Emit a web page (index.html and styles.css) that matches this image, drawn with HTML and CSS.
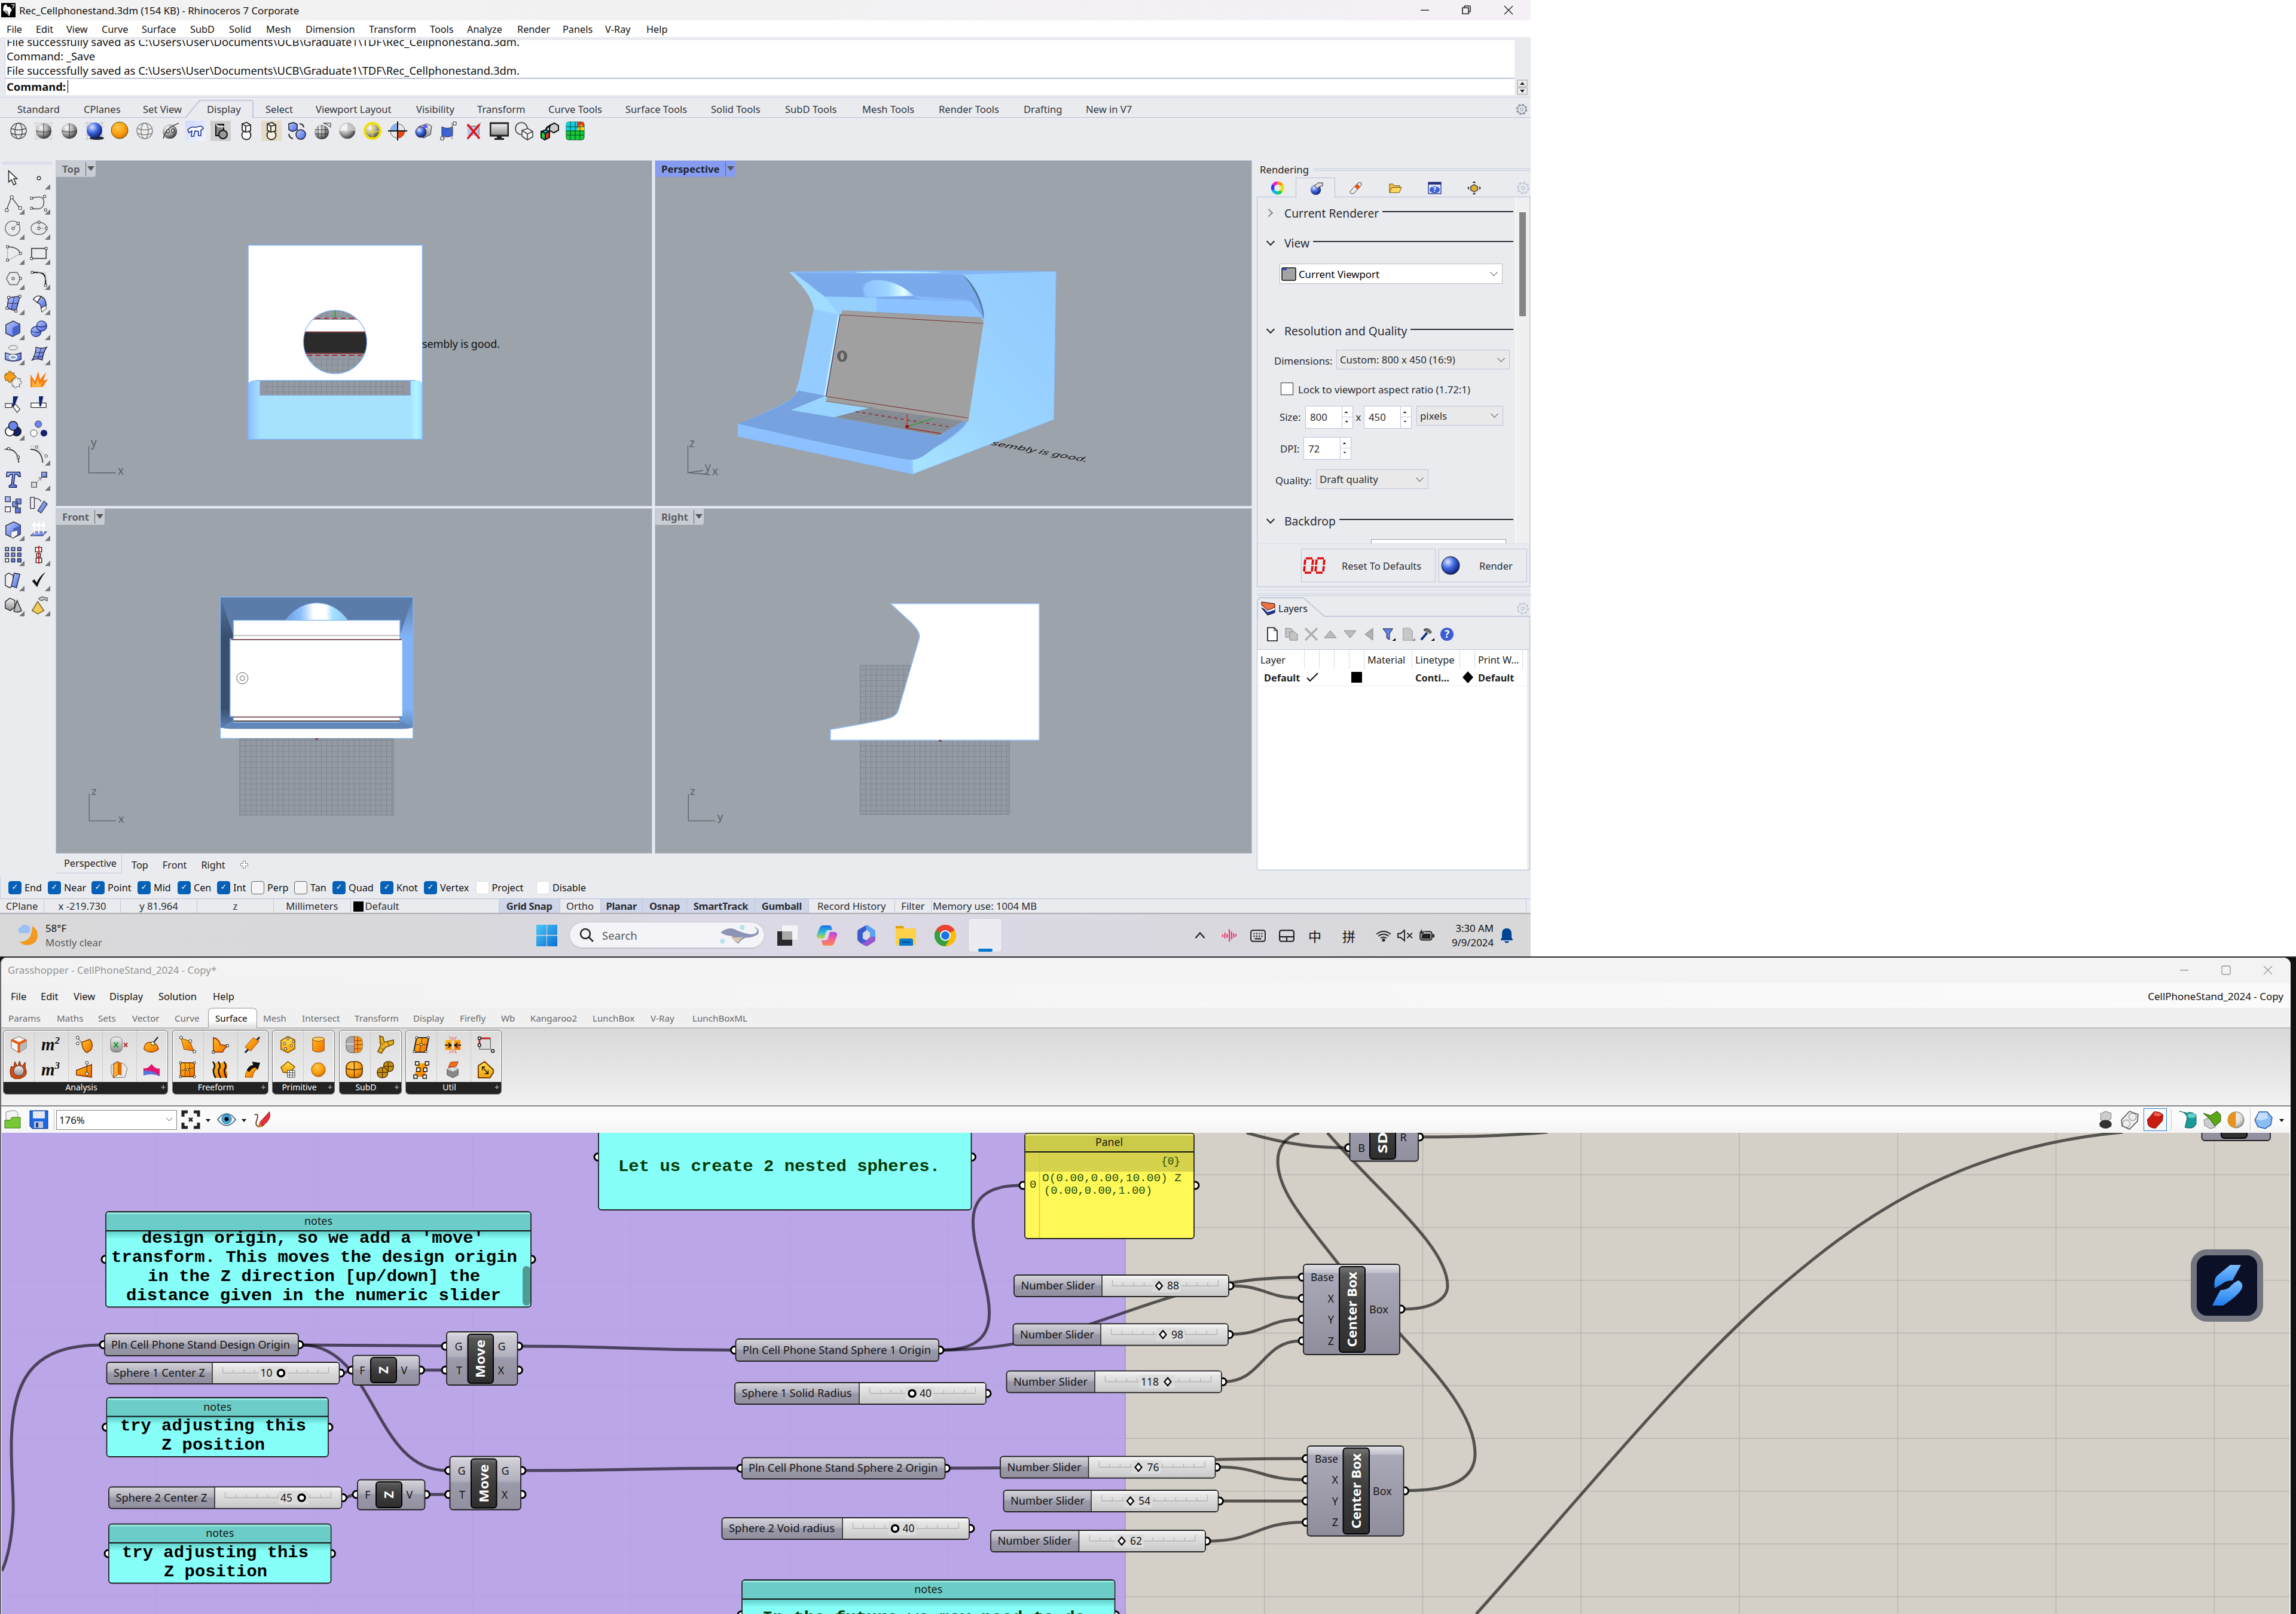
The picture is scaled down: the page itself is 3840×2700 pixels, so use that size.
FILE: index.html
```html
<!DOCTYPE html>
<html lang="en">
<head>
<meta charset="utf-8">
<title>Rhinoceros and Grasshopper</title>
<link rel="stylesheet" href="styles.css">
</head>
<body>
<svg class="defs" width="0" height="0">
  <defs>
    <radialGradient id="gG" cx=".35" cy=".3" r=".8"><stop offset="0" stop-color="#fff"/><stop offset=".5" stop-color="#a8a8a8"/><stop offset="1" stop-color="#222"/></radialGradient>
    <radialGradient id="gL" cx=".35" cy=".3" r=".8"><stop offset="0" stop-color="#fff"/><stop offset=".6" stop-color="#ddd"/><stop offset="1" stop-color="#888"/></radialGradient>
    <radialGradient id="gB" cx=".35" cy=".3" r=".8"><stop offset="0" stop-color="#dfe8ff"/><stop offset=".45" stop-color="#3f68e0"/><stop offset="1" stop-color="#04105a"/></radialGradient>
    <radialGradient id="gO" cx=".4" cy=".3" r=".8"><stop offset="0" stop-color="#ffc94a"/><stop offset=".6" stop-color="#f79a0c"/><stop offset="1" stop-color="#b86400"/></radialGradient>
    <linearGradient id="lB" x1="0" y1="0" x2="1" y2="1"><stop offset="0" stop-color="#b9c8ff"/><stop offset="1" stop-color="#4a68e0"/></linearGradient>
    <linearGradient id="lO" x1="0" y1="0" x2="1" y2="1"><stop offset="0" stop-color="#ffc21a"/><stop offset="1" stop-color="#f06c00"/></linearGradient>
    <linearGradient id="lY" x1="0" y1="0" x2="0" y2="1"><stop offset="0" stop-color="#ffe04a"/><stop offset="1" stop-color="#f2a20c"/></linearGradient>
    <linearGradient id="lG" x1="0" y1="0" x2="0" y2="1"><stop offset="0" stop-color="#f4f4f4"/><stop offset="1" stop-color="#8c8c8c"/></linearGradient>
    <linearGradient id="edgeL" x1="0" x2="1"><stop offset="0" stop-color="#8cbcfa"/><stop offset="1" stop-color="#a6e2fe"/></linearGradient>
    <linearGradient id="edgeR" x1="0" x2="1"><stop offset="0" stop-color="#a6e2fe"/><stop offset=".5" stop-color="#b2f5ff"/><stop offset="1" stop-color="#9fdcff"/></linearGradient>
    <linearGradient id="dome" x1="0" x2="1"><stop offset="0" stop-color="#6f9cdb"/><stop offset=".25" stop-color="#8cc0ff"/><stop offset=".45" stop-color="#fff"/><stop offset=".65" stop-color="#fff"/><stop offset=".75" stop-color="#a6e2fe"/><stop offset="1" stop-color="#8cc8f8"/></linearGradient>
    <linearGradient id="dome2" x1="0" x2="1"><stop offset="0" stop-color="#8cc0ff"/><stop offset=".5" stop-color="#9ed6ff"/><stop offset=".8" stop-color="#e4ffff"/><stop offset="1" stop-color="#9bd4ff"/></linearGradient>
    <linearGradient id="sideL" x1="0" y1="0" x2="0" y2="1"><stop offset="0" stop-color="#56759f"/><stop offset=".3" stop-color="#3a4f6e"/><stop offset=".85" stop-color="#3a4f6e"/><stop offset="1" stop-color="#5d84b6"/></linearGradient>
    <linearGradient id="sideR" x1="0" y1="0" x2="0" y2="1"><stop offset="0" stop-color="#5b7ba9"/><stop offset=".3" stop-color="#82b2f6"/><stop offset=".85" stop-color="#82b2f6"/><stop offset="1" stop-color="#6088ba"/></linearGradient>
    <linearGradient id="flank" x1="0" y1="1" x2=".7" y2="0"><stop offset="0" stop-color="#a8e4ff"/><stop offset=".4" stop-color="#9bd5ff"/><stop offset="1" stop-color="#94ccff"/></linearGradient>
    <pattern id="cg" width="9.1" height="9.1" patternUnits="userSpaceOnUse"><rect width="9.1" height="9.1" fill="#969da6"/><path d="M0 3h9M0 6h9M3 0v9M6 0v9" stroke="#8f969f" stroke-width=".7"/><path d="M0 .5h9.1M.5 0v9.1" stroke="#7e858d"/></pattern>
    <linearGradient id="nodeG" x1="0" y1="0" x2="0" y2="1"><stop offset="0" stop-color="#e4e3e9"/><stop offset=".08" stop-color="#cfced6"/><stop offset=".45" stop-color="#b1b0bd"/><stop offset=".5" stop-color="#9b9aaa"/><stop offset="1" stop-color="#918f9e"/></linearGradient>
    <linearGradient id="nodeBig" x1="0" y1="0" x2="0" y2="1"><stop offset="0" stop-color="#e4e3e9"/><stop offset=".09" stop-color="#c3c2cc"/><stop offset=".1" stop-color="#aaa9b8"/><stop offset="1" stop-color="#8f8d9c"/></linearGradient>
    <linearGradient id="sldG" x1="0" y1="0" x2="0" y2="1"><stop offset="0" stop-color="#fafafa"/><stop offset=".15" stop-color="#e8e8e8"/><stop offset="1" stop-color="#c8c8c8"/></linearGradient>
    <linearGradient id="icoG" x1="0" y1="0" x2="0" y2="1"><stop offset="0" stop-color="#777"/><stop offset=".1" stop-color="#555"/><stop offset=".5" stop-color="#3c3c3c"/><stop offset="1" stop-color="#2e2e2e"/></linearGradient>
    <linearGradient id="noteSh" x1="0" y1="0" x2="0" y2="1"><stop offset="0" stop-color="#5fcac4"/><stop offset="1" stop-color="#86fff8"/></linearGradient>
    <linearGradient id="sBlue" x1="0" y1="0" x2="0" y2="1"><stop offset="0" stop-color="#7cc0ff"/><stop offset="1" stop-color="#1e7cf0"/></linearGradient>
    <linearGradient id="cop1" x1="0" y1="0" x2="0" y2="1"><stop offset="0" stop-color="#1c6fe8"/><stop offset=".5" stop-color="#2ab8d8"/><stop offset="1" stop-color="#c8d838"/></linearGradient>
    <linearGradient id="cop2" x1="0" y1="0" x2="0" y2="1"><stop offset="0" stop-color="#b048e8"/><stop offset=".5" stop-color="#f0609a"/><stop offset="1" stop-color="#ff8a4a"/></linearGradient>
    <linearGradient id="win" x1="0" y1="0" x2="1" y2="1"><stop offset="0" stop-color="#4cc8fa"/><stop offset="1" stop-color="#0a6fd0"/></linearGradient>
  </defs>
</svg>
<div class="screen">

<section class="rhino">
  <header class="r-title">
    <svg width="24" height="24" viewBox="0 0 24 24"><path fill="#000" d="M0 0h24v24H0z"/><path fill="#fff" d="M4 5l4-3 3 5 3-1 4 6-3 4-1 6-6-5-5-5z"/><path fill="#777" d="M5 12l6 2 2 8z"/><path d="M17 3h5l-3 6" fill="none" stroke="#ccc" stroke-width="1.500"/></svg>
    <span class="r-name">Rec_Cellphonestand.3dm (154 KB) - Rhinoceros 7 Corporate</span>
    <div class="wbtns"><svg width="16" height="16"><path d="M1 8h14" stroke="#222" fill="none" stroke-width="1.4"/></svg><svg width="18" height="18"><path d="M2 5h10v10H2zM5 5V3q0-1 1-1h8q1 0 1 1v8q0 1-1 1h-2" stroke="#222" fill="none" stroke-width="1.6"/></svg><svg width="16" height="16"><path d="M1 1l14 14M15 1L1 15" stroke="#222" fill="none" stroke-width="1.4"/></svg></div>
  </header>
  <nav class="r-menu"><span>File</span><span>Edit</span><span>View</span><span>Curve</span><span>Surface</span><span>SubD</span><span>Solid</span><span>Mesh</span><span>Dimension</span><span>Transform</span><span>Tools</span><span>Analyze</span><span>Render</span><span>Panels</span><span>V-Ray</span><span>Help</span></nav>
  <div class="cmd">
    <div class="cmd-box">
      <div class="hist"><p>File successfully saved as C:\Users\User\Documents\UCB\Graduate1\TDF\Rec_Cellphonestand.3dm.</p><p>Command: _Save</p><p>File successfully saved as C:\Users\User\Documents\UCB\Graduate1\TDF\Rec_Cellphonestand.3dm.</p></div>
      <div class="prompt"><b>Command:</b><i></i></div>
    </div>
    <div class="spin2"><svg width="18" height="26"><path d="M1 1h16v11H1zM1 14h16v11H1z" fill="#eee" stroke="#999"/><path d="M5 9h8L9 4zM5 17h8l-4 5z" fill="#222"/></svg></div>
  </div>
  <nav class="r-tabs"><span>Standard</span><span>CPlanes</span><span>Set View</span><span class="on"><svg width="114" height="31" viewBox="0 0 114 31"><path d="M0 30L24 1h87q2 0 2 2v27" fill="#e9ebef" stroke="#b8c0da" stroke-width="1.6"/></svg>Display</span><span>Select</span><span>Viewport Layout</span><span>Visibility</span><span>Transform</span><span>Curve Tools</span><span>Surface Tools</span><span>Solid Tools</span><span>SubD Tools</span><span>Mesh Tools</span><span>Render Tools</span><span>Drafting</span><span>New in V7</span><span class="gear"><svg width="22" height="22" viewBox="0 0 22 22" fill="none" stroke="#8a8f9c"><circle cx="11" cy="11" r="8" stroke-width="2.5" stroke-dasharray="4 2.3"/><circle cx="11" cy="11" r="6.5"/><circle cx="11" cy="11" r="2.5"/></svg></span></nav>
  <div class="r-icons">
    <svg viewBox="0 0 32 32" fill="none" stroke="#555" stroke-width="1.5"><circle cx="16" cy="16" r="13"/><ellipse cx="16" cy="16" rx="6" ry="13"/><path d="M4 12q12 5 24 0M4 20q12 5 24 0"/></svg>
    <svg viewBox="0 0 32 32"><path d="M0 3h32M0 9h32M0 23h32M0 29h32M4 0v32M28 0v32" stroke="#ccc"/><circle cx="16" cy="16" r="13" fill="url(#gG)"/><path d="M16 3v26M3 16q13 4 26 0" stroke="#333" fill="none"/></svg>
    <svg viewBox="0 0 32 32"><circle cx="16" cy="16" r="13" fill="url(#gG)"/><path d="M16 3v26M3 16q13 4 26 0" stroke="#333" fill="none"/></svg>
    <svg viewBox="0 0 32 32"><path d="M0 3h32M0 9h32M0 23h32M0 29h32M4 0v32M10 0v32M28 0v32" stroke="#bbb"/><ellipse cx="20" cy="28" rx="12" ry="3" fill="#223"/><circle cx="16" cy="15" r="13" fill="url(#gB)"/></svg>
    <svg viewBox="0 0 32 32"><circle cx="16" cy="15" r="14" fill="url(#gO)" stroke="#7a4a00"/></svg>
    <svg viewBox="0 0 32 32" fill="none" stroke="#888" stroke-width="1.5"><circle cx="16" cy="16" r="13" fill="#eee"/><ellipse cx="16" cy="16" rx="6" ry="13"/><path d="M4 12q12 5 24 0M4 20q12 5 24 0"/></svg>
    <svg viewBox="0 0 32 32"><circle cx="15" cy="17" r="12" fill="url(#gG)"/><path d="M4 29C8 12 18 8 30 3" stroke="#444" fill="none" stroke-width="1.5"/><path d="M10 14h4v5h-4zM18 13h4v5h-4z" fill="#fff" stroke="#000"/></svg>
    <svg viewBox="0 0 32 32" class="hl-b"><path d="M3 14q6-6 13-4l8-2q5 1 5 4l-4 3v9h-4v-7l-6-1-2 9H9l1-9-5 3z" fill="#fff" stroke="#1d2f8c" stroke-width="1.6"/></svg>
    <svg viewBox="0 0 32 32" class="hl-g"><path d="M8 5h13v19H8z" fill="#888" stroke="#111" stroke-width="2"/><path d="M8 5l5 4h9" stroke="#eee" fill="none" stroke-width="2"/><circle cx="20" cy="22" r="7" fill="#999" stroke="#111" stroke-width="2"/></svg>
    <svg viewBox="0 0 32 32" fill="#fff" stroke="#222" stroke-width="1.8"><circle cx="16" cy="23" r="7.500"/><path d="M9 4l8-2 6 4v10l-8 2-6-3zM9 4l6 4v9M15 8l8-2"/></svg>
    <svg viewBox="0 0 32 32" class="hl-y" fill="#f6f0dc" stroke="#222" stroke-width="1.8"><circle cx="16" cy="23" r="7.500"/><path d="M9 4l8-2 6 4v10l-8 2-6-3zM9 4l6 4v9M15 8l8-2"/></svg>
    <svg viewBox="0 0 32 32"><path d="M3 4l8-2 6 3v9l-8 3-6-3z" fill="url(#lB)" stroke="#112" stroke-width="1.4"/><circle cx="23" cy="22" r="8" fill="url(#lB)" stroke="#112" stroke-width="1.4"/><path d="M21 4q6 0 7 6M3 21q1 7 7 8" stroke="#222" fill="none" stroke-width="2"/></svg>
    <svg viewBox="0 0 32 32"><circle cx="15" cy="18" r="12" fill="url(#gG)"/><path d="M15 6v24M4 14h22M4 21h22M9 8v20M21 8v20" stroke="#333" fill="none"/><path d="M18 3h12v7l-5-4z" fill="#eee" stroke="#222"/></svg>
    <svg viewBox="0 0 32 32"><circle cx="16" cy="16" r="13" fill="url(#gG)" stroke="#777"/><path d="M3 16a13 13 0 0 1 13-13v13z" fill="#f4f4f4" fill-opacity=".8"/><path d="M16 16h13a13 13 0 0 0-13-13z" fill="#ccc" fill-opacity=".8"/></svg>
    <svg viewBox="0 0 32 32"><circle cx="16" cy="16" r="13" fill="url(#gG)" stroke="#f2e000" stroke-width="4"/><path d="M16 3v26M3 16q13 4 26 0" stroke="#e8d820" fill="none" stroke-width="1.500"/></svg>
    <svg viewBox="0 0 32 32"><circle cx="16" cy="16" r="12" fill="#e8e8e8" stroke="#555"/><path d="M16 16V4A12 12 0 0 0 4 16z" fill="#8ab0f4"/><path d="M16 16v12a12 12 0 0 0 12-12z" fill="#e84a10"/><path d="M16 0v32M0 16h32" stroke="#111" stroke-width="2"/></svg>
    <svg viewBox="0 0 32 32"><path d="M8 9l14-5 8 4-2 14-12 6z" fill="url(#lG)" stroke="#333"/><circle cx="12" cy="18" r="9" fill="url(#gB)" stroke="#333"/><path d="M16 6h7v5h-7z" fill="#6a5cf0"/></svg>
    <svg viewBox="0 0 32 32"><path d="M5 9q9 5 18 0v15q-9 4-18 0z" fill="#3a62d8" stroke="#234"/><path d="M8 30L26 4M22 2v28" stroke="#777" fill="none"/><path d="M3 26h5v5H3zM24 1h5v5h-5z" fill="#fff" stroke="#222"/></svg>
    <svg viewBox="0 0 32 32"><path d="M6 8h18v16H6z" fill="#b8c4e8"/><path d="M5 30L28 2M5 8h20v16" stroke="#555" fill="none"/><path d="M6 5l20 24M26 5L6 29" stroke="#e01010" stroke-width="3.500"/></svg>
    <svg viewBox="0 0 32 32"><path d="M1 3h30v21H1z" fill="url(#lG)" stroke="#222" stroke-width="3"/><path d="M12 24h8v4h4v3H8v-3h4z" fill="#222"/></svg>
    <svg viewBox="0 0 32 32" fill="#f3f3f3" stroke="#444" stroke-width="1.6"><circle cx="11" cy="12" r="10" fill="none"/><path d="M12 15l10-3 8 5v9l-9 5-9-6zM12 15l9 6v10M21 21l9-4"/></svg>
    <svg viewBox="0 0 32 32"><path d="M2 17l8-3 6 3v10l-8 4-6-4z" fill="#18b8c0" stroke="#111" stroke-width="2"/><path d="M2 17l7 3v11M9 20l7-3" stroke="#111" fill="none" stroke-width="2"/><path d="M3 19l5 2v8l-5-3z" fill="#20d820"/><path d="M10 21l5-2v7l-5 3z" fill="#e83020"/><path d="M16 7l8-4 7 4v8l-8 4-7-4z" fill="#ccc" stroke="#111" stroke-width="2"/><path d="M10 14q2-6 8-6" stroke="#111" stroke-width="3" fill="none"/></svg>
    <svg viewBox="0 0 32 32"><rect x="1" y="1" width="30" height="30" rx="4" fill="#18c838" stroke="#063"/><path d="M1 5q0-4 4-4h14v14H1z" fill="#10d0e8"/><path d="M19 1h8q4 0 4 4v6H19z" fill="#f03818"/><path d="M24 4l7 6v5H19z" fill="#f8d020"/><path d="M1 9h30M1 16h30M1 23h30M8 1v30M16 1v30M24 1v30" stroke="#042" stroke-width="1"/></svg>
  </div>

  <div class="r-main">
    <div class="r-left">
      <div class="r-work">
        <div class="tools">
          <span><svg viewBox="0 0 32 32"><path d="M8 3v20l5-4 4 9 4-2-4-9h6z" fill="#fff" stroke="#222" stroke-width="1.6"/></svg></span>
          <span class="m"><svg viewBox="0 0 32 32"><circle cx="16" cy="16" r="3" fill="#fff" stroke="#333" stroke-width="1.6"/></svg></span>
          <span class="m"><svg viewBox="0 0 32 32"><path d="M4 28L13 5l15 20" fill="none" stroke="#555" stroke-width="1.6"/><path d="M2 26h5v5H2zM11 3h5v5h-5zM26 22h5v5h-5z" fill="#fff" stroke="#222"/></svg></span>
          <span class="m"><svg viewBox="0 0 32 32"><path d="M3 7Q26 0 25 15t-21 10" fill="none" stroke="#555" stroke-width="1.6"/><path d="M1 5h4v4H1zM1 23h4v4H1zM24 2h4v4h-4zM26 26h4v4h-4z" fill="#fff" stroke="#222"/></svg></span>
          <span class="m"><svg viewBox="0 0 32 32"><circle cx="15" cy="16" r="13" fill="none" stroke="#777" stroke-width="1.6"/><path d="M16 16L25 7" stroke="#555"/><path d="M14 14h4v4h-4zM23 5h4v4h-4z" fill="#fff" stroke="#222"/></svg></span>
          <span class="m"><svg viewBox="0 0 32 32"><ellipse cx="16" cy="16" rx="14" ry="11" fill="none" stroke="#777" stroke-width="1.6"/><path d="M16 5v11h13" stroke="#999" fill="none"/><path d="M14 14h4v4h-4zM14 3h4v4h-4zM28 14h4v4h-4z" fill="#fff" stroke="#222"/></svg></span>
          <span class="m"><svg viewBox="0 0 32 32"><path d="M6 4q18 0 23 12" fill="none" stroke="#444" stroke-width="1.6"/><path d="M6 29V4M29 16L6 29" fill="none" stroke="#aaa" stroke-width="1.2"/><path d="M4 2h4v4H4zM4 26h4v4H4zM27 14h4v4h-4z" fill="#fff" stroke="#222"/></svg></span>
          <span class="m"><svg viewBox="0 0 32 32"><path d="M3 7h26v18H3z" fill="none" stroke="#444" stroke-width="1.8"/><path d="M1 23h4v4H1zM27 5h4v4h-4z" fill="#fff" stroke="#222"/></svg></span>
          <span class="m"><svg viewBox="0 0 32 32"><path d="M4 16L10 5h13l6 11-6 11H10z" fill="none" stroke="#666" stroke-width="1.6"/><path d="M14 14h4v4h-4zM27 14h4v4h-4z" fill="#fff" stroke="#222"/></svg></span>
          <span class="m"><svg viewBox="0 0 32 32"><path d="M4 5h10q14 0 14 14v9" fill="none" stroke="#111" stroke-width="2.2"/><path d="M14 5h14v14" stroke="#bbb" fill="none"/><path d="M2 3h4v4H2zM26 26h4v4h-4z" fill="#fff" stroke="#222"/></svg></span>
          <span class="m"><svg viewBox="0 0 32 32"><path d="M8 5l20-2-7 26-16-5z" fill="url(#lB)" stroke="#223" stroke-width="1.4"/><path d="M18 4l-5 23M6 15l19 1" stroke="#223"/><path d="M6 3h4v4H6zM26 1h4v4h-4zM19 27h4v4h-4zM3 22h4v4H3z" fill="#fff" stroke="#222"/></svg></span>
          <span class="m"><svg viewBox="0 0 32 32"><path d="M6 8q6-8 14-5l-7 11q-2-2-7-6z" fill="#fff" stroke="#222" stroke-width="1.4"/><path d="M13 14l7-11q9 4 9 16l-9 5q0-8-7-10z" fill="url(#lB)" stroke="#222" stroke-width="1.4"/><path d="M20 24l9-5v6l-8 6z" fill="#fff" stroke="#222"/></svg></span>
          <span class="m"><svg viewBox="0 0 32 32"><path d="M3 9l13-7 12 6v15l-13 7-12-6z" fill="url(#lB)" stroke="#222" stroke-width="1.4"/><path d="M15 14v16l13-7V8z" fill="#4a62c8"/></svg></span>
          <span class="m"><svg viewBox="0 0 32 32" fill="url(#lB)" stroke="#1a2a70" stroke-width="1.4"><circle cx="11" cy="21" r="9"/><circle cx="21" cy="11" r="9"/><path d="M3 20q8 5 17 1M13 11q8 4 17-1" fill="none"/></svg></span>
          <span class="m"><svg viewBox="0 0 32 32"><ellipse cx="16" cy="5" rx="8" ry="4" fill="none" stroke="#666"/><path d="M2 14q14 6 28 0v12q-14 6-28 0z" fill="url(#lB)" stroke="#223" stroke-width="1.4"/><ellipse cx="16" cy="22" rx="6" ry="4" fill="#9ab" stroke="#fff" stroke-width="2.5"/></svg></span>
          <span class="m"><svg viewBox="0 0 32 32"><path d="M11 4q9 4 19 0-6 8-8 23-9-4-18 0Q10 18 11 4z" fill="url(#lB)" stroke="#223" stroke-width="1.4"/><path d="M20 5l-6 21M9 12q9 4 17 0M6 20q9 3 18 0" stroke="#223" fill="none"/></svg></span>
          <span><svg viewBox="0 0 32 32"><path d="M2 6l5 1q-1-5 3-5t3 4l5-1-1 5q5-1 4 3t-4 2l1 4-5-1q1 4-3 4t-3-4l-5 1 1-4q-4 0-3-4t4-1z" fill="#f5a21a" stroke="#7a4a00"/><path d="M15 15l4 1q0-4 3-3t2 3l5-1-1 5q4 0 3 3t-4 2l1 5-5-1q-1 4-4 3t-1-4l-4 1 1-4q-3-1-2-4t3-1z" fill="#eee" stroke="#555"/></svg></span>
          <span><svg viewBox="0 0 32 32"><path d="M1 31V8l8 12L15 2l3 15L29 4l-5 15 8-3-9 14z" fill="#f57c12"/><path d="M4 31V18l6 8 4-12 3 11 6-5-4 11z" fill="#ffb040"/></svg></span>
          <span><svg viewBox="0 0 32 32"><path d="M2 15h12v7H2zM14 18l5-3 9 10-5 6z" fill="#fff" stroke="#333" stroke-width="1.3"/><path d="M16 2h9l-7 18h-3z" fill="#13236e"/></svg></span>
          <span><svg viewBox="0 0 32 32"><path d="M2 14h27v8H2z" fill="#fff" stroke="#333" stroke-width="1.3"/><path d="M16 2h8l-4 18h-3z" fill="#13236e"/></svg></span>
          <span class="m"><svg viewBox="0 0 32 32" stroke="#111" stroke-width="1.6"><circle cx="22" cy="20" r="8" fill="#13236e"/><circle cx="10" cy="20" r="8" fill="#fff"/><circle cx="16" cy="10" r="8" fill="#6c86f0"/></svg></span>
          <span><svg viewBox="0 0 32 32"><circle cx="15" cy="7" r="6" fill="#6c86f0" stroke="#334"/><circle cx="7" cy="23" r="6" fill="#fff" stroke="#333"/><circle cx="25" cy="23" r="6" fill="#13236e"/></svg></span>
          <span><svg viewBox="0 0 32 32"><path d="M1 7q24-2 25 24" fill="none" stroke="#333" stroke-width="1.8"/><path d="M6 4h4v4H6zM23 19h4v4h-4z" fill="#fff" stroke="#111"/></svg></span>
          <span class="m"><svg viewBox="0 0 32 32"><path d="M1 7q20 0 22 24" fill="none" stroke="#333" stroke-width="1.8"/><path d="M1 2h10l18 18" stroke="#888" stroke-dasharray="2 2" fill="none"/><path d="M10 1h4v4h-4zM27 17h4v4h-4z" fill="#fff" stroke="#444"/></svg></span>
          <span><svg viewBox="0 0 32 32"><path d="M5 3h23l1 8h-3l-3-4h-4l-2 18 5 2v3H9v-3l4-2 2-18h-4l-3 4H4z" fill="url(#lB)" stroke="#1a2560" stroke-width="1.6"/></svg></span>
          <span class="m"><svg viewBox="0 0 32 32"><path d="M3 21h9v9H3z" fill="#ddd" stroke="#555" stroke-width="1.4"/><path d="M21 3h9v9h-9z" fill="url(#lB)" stroke="#333" stroke-width="1.4"/><path d="M13 20l7-7M15 13h5v5" stroke="#555" fill="none"/></svg></span>
          <span><svg viewBox="0 0 32 32" stroke="#334" stroke-width="1.4"><path d="M2 2h9v9H2zM21 6h9v9h-9zM15 11h9v9h-9zM20 22h9v9h-9z" fill="url(#lB)"/><path d="M2 20h9v9H2z" fill="#fff"/></svg></span>
          <span><svg viewBox="0 0 32 32" stroke="#334" stroke-width="1.4"><path d="M1 3h7v20H1z" fill="#eee"/><path d="M14 27L25 10l6 5-11 16z" fill="url(#lB)"/><path d="M9 5q8 0 11 6" fill="none"/></svg></span>
          <span class="m"><svg viewBox="0 0 32 32"><path d="M3 9l14-7 12 6v16l-13 7-13-6z" fill="url(#lB)" stroke="#222" stroke-width="1.4"/><path d="M16 14v16l13-7V8z" fill="#4a62c8"/><path d="M12 20l12-3v8l-8 6-4-2z" fill="#f3f3f3" stroke="#555"/></svg></span>
          <span class="m"><svg viewBox="0 0 32 32"><path d="M1 27l7-7h22l-7 7z" fill="url(#lB)" stroke="#334"/><path d="M8 23V6M16 23V6M24 23V6M5 9l3-6 3 6zM13 9l3-6 3 6zM21 9l3-6 3 6z" stroke="#fff" stroke-width="2" fill="#fff"/></svg></span>
          <span class="m"><svg viewBox="0 0 32 32" fill="url(#lB)" stroke="#223" stroke-width="1.4"><path d="M2 3h6v6H2zM13 3h6v6h-6zM24 3h6v6h-6zM2 13h6v6H2zM13 13h6v6h-6zM24 13h6v6h-6zM13 23h6v6h-6zM24 23h6v6h-6z"/><path d="M2 23h6v6H2z" fill="#fff"/></svg></span>
          <span class="m"><svg viewBox="0 0 32 32" fill="#fff" stroke="#333" stroke-width="1.6"><path d="M10 3h11v8H10zM12 14h7v6h-7zM11 22h10v8H11z"/><path d="M16 0v32" stroke="#e02020" stroke-width="2.2"/></svg></span>
          <span class="m"><svg viewBox="0 0 32 32" stroke="#223" stroke-width="1.4"><path d="M2 8l6-4 8 4v18l-6 4-8-4z" fill="#eee"/><path d="M18 4l10 2-6 24-9-3z" fill="url(#lB)"/></svg></span>
          <span class="m"><svg viewBox="0 0 32 32"><path d="M4 18l4-3 4 6Q18 8 28 2 18 14 13 29z" fill="#111"/></svg></span>
          <span class="m"><svg viewBox="0 0 32 32" stroke="#222" stroke-width="1.4"><path d="M2 10l8-6 9 4v12l-8 6-9-4z" fill="url(#lG)"/><path d="M23 8l8 18q-6 5-14 1z" fill="#bbb"/></svg></span>
          <span class="m"><svg viewBox="0 0 32 32"><path d="M14 10L4 26l10 6 11-6z" fill="#f0cc58" stroke="#6a5310" stroke-width="1.4"/><path d="M15 5q6-6 12-2h4v6l-6-3q-3 4-6 2z" fill="#bbb" stroke="#333"/></svg></span>
        </div>
        <div class="views">
          <div class="vp">
            <div class="vlabel">Top<i></i></div>
            <svg viewBox="94 269 996 577">
              <rect x="415" y="410" width="291.5" height="325" fill="#fff"/>
              <clipPath id="hole"><circle cx="560.5" cy="572" r="53"/></clipPath>
              <g clip-path="url(#hole)"><rect x="500" y="515" width="120" height="20" fill="url(#cg)"/><rect x="500" y="590" width="120" height="40" fill="url(#cg)"/><rect x="500" y="555" width="120" height="37" fill="#2b2b2b"/><path d="M500 555.5h120M500 591h120" stroke="#7c3a3e" stroke-width="2"/><path d="M500 532.5h120M500 594.5h120" stroke="#b01020" stroke-width="1.5" stroke-dasharray="8 6"/><path d="M560.500 518v14" stroke="#2fa02f" stroke-width="2"/></g>
              <circle cx="560.500" cy="572" r="53" fill="none" stroke="#7fb4f8" stroke-width="1.2"/>
              <path d="M415 735V641q6-5 13-5h266q8 0 12.500 5v94z" fill="#a6e2fe"/><path d="M415 735V641q6-5 13-5h8v99z" fill="url(#edgeL)"/><path d="M686 735V636h8q8 0 12.500 5v94z" fill="url(#edgeR)"/>
              <path d="M434.500 636.500h252v25h-252z" fill="#9198a1" stroke="#86b6f6"/><path d="M444 637h233v24H444z" fill="url(#cg)"/>
              <path d="M428 636.500h266M415 410h291.500v325H415z" fill="none" stroke="#7fb4f8" stroke-width="1.5"/>
              <text x="706" y="582" font-size="18" fill="#111" textLength="130">sembly is good.</text>
              <path d="M148.500 746v45h45" class="ax"/><text x="152" y="747" class="axt">y</text><text x="197" y="794" class="axt">x</text>
            </svg>
          </div>
          <div class="vp">
            <div class="vlabel act">Perspective<i></i></div>
            <svg viewBox="1096 269 997 577">
              <svg x="1080" y="240" width="1020" height="620" viewBox="0 0 1568 1568" preserveAspectRatio="none">
                <path d="M369 544L650 536 1055 542 1049 1168 686 1399 237 1239V1186C330 1125 375 1085 385 1065 392 1050 394 1030 395 1000L432 700C430 650 400 600 369 544z" fill="#94ccff"/>
                <path d="M369 544L650 536 1055 542 815 555z" fill="#84b4f4"/>
                <ellipse cx="650" cy="545" rx="110" ry="3" fill="#bff4ff"/>
                <path d="M380 546L815 555C850 610 868 650 869 745L837 670 460 648z" fill="#7aaaec"/>
                <path d="M369 544C400 600 425 640 432 700L500 725 460 648 380 546z" fill="#9fdcff"/>
                <path d="M460 648L837 670 869 740 500 725z" fill="#8cc2ff"/><path d="M460 648l133 3v70l-93 4z" fill="#96d0ff"/>
                <path d="M565 651C550 600 565 577 598 577 650 582 680 630 690 645z" fill="url(#dome2)" stroke="#84b4f4"/><path d="M690 645l17 17 130 8-3-8z" fill="#84b8fa"/>
                <path d="M815 555C850 620 870 680 869 745L862 690Q850 620 815 555z" fill="#4a6d9c"/>
                <path d="M432 700L500 725 463 1070 385 1050 395 1000z" fill="#94ccff"/><path d="M496 727l-36 340" stroke="#c8fbff" stroke-width="3"/>
                <path d="M392 1045L463 1067 374 1128 480 1157 752 1238 827 1166C827 1190 800 1230 745 1285 715 1320 705 1338 680 1338 660 1340 400 1250 237 1186 330 1125 385 1085 392 1045z" fill="#76a3e0"/>
                <path d="M374 1128l89-60 114 50-92 40z" fill="#98d4ff"/>
                <path d="M577 1118l250 48-75 71-267-79z" fill="#878e96"/><g stroke="#717880" stroke-width=".8"><path d="M550 1130l250 65M520 1142l255 75M620 1130l-90 40M670 1140l-85 46M720 1150l-80 53M770 1160l-70 62M590 1122l220 52M536 1136l246 72M502 1150l252 78"/></g>
                <path d="M237 1186C400 1250 640 1340 680 1338L686 1399 237 1239z" fill="#8cc0ff"/>
                <path d="M869 745L827 1180C815 1215 790 1250 750 1282 715 1320 705 1338 686 1338V1399L1049 1168 1055 542 815 555C850 620 870 680 869 745z" fill="url(#flank)"/>
                <path d="M815 555C850 600 872 690 869 745 866 690 845 610 815 555z" fill="#54789f"/>
                <path d="M505 707l358 30 6 16-40 425-365-85 2-22 36-346z" fill="#a0a0a0"/><path d="M505 707l358 30" stroke="#8a8a8a"/>
                <path d="M500 725l366 36M463 1070l365 91M500 725l-36 345" stroke="#702424" fill="none" stroke-width="2"/>
                <path d="M463 1092l125 30-5-6-120-28z" fill="#8a8a8a"/>
                <ellipse cx="505" cy="900" rx="9" ry="20" fill="none" stroke="#5c5c5c" stroke-width="8"/>
                <path d="M540 1134l244 66" stroke="#a01414" stroke-width="3" stroke-dasharray="9 8"/><path d="M672 1145v52" stroke="#f01818" stroke-width="2"/><path d="M672 1198l69-35" stroke="#3f9a3a" stroke-width="4"/><path d="M668 1203l92 25" stroke="#9c4040" stroke-width="5"/><circle cx="672" cy="1197" r="5" fill="#900"/>
                <path d="M369 544L650 536 1055 542 1049 1168 686 1399 237 1239V1186M686 1338v61" fill="none" stroke="#84b8fa" stroke-width="1.5"/>
              </svg>
              <text transform="matrix(1 .18 -.6 .52 1657 743)" x="0" y="2" font-size="18" fill="#111" textLength="160" lengthAdjust="spacingAndGlyphs">sembly is good.</text>
              <path d="M1150.500 745v46l37 3M1150 791l26-4" class="ax"/><text x="1153" y="748" class="axt">z</text><text x="1179" y="788" class="axt">y</text><text x="1191" y="795" class="axt">x</text>
            </svg>
          </div>
          <div class="vp">
            <div class="vlabel">Front<i></i></div>
            <svg viewBox="94 850 996 577">
              <rect x="368" y="998" width="323" height="237" fill="#5b7ba9"/>
              <path d="M368 998l22 64v6h-6v130l6 6v8l-22 6z" fill="url(#sideL)"/><path d="M691 998l-22 64v6h5v130l-5 6v8l22 6z" fill="url(#sideR)"/>
              <path d="M368 1218h323l-22-14H390z" fill="#6087b9"/>
              <path d="M477 1037Q500 1008 530 1008t52 29z" fill="url(#dome)" stroke="#7fb4f8"/>
              <path d="M390 1037h279v31h4.500v130H669v10H390v-10h-5.500v-130h5.500z" fill="#fff" stroke="#7fb4f8" stroke-width="1.4"/>
              <path d="M390 1062.500h279" stroke="#888"/><path d="M386 1069.500h286M390 1199h279" stroke="#5a2026" stroke-width="1.5"/><path d="M390 1206h279" stroke="#222" stroke-width="1.6"/>
              <path d="M368 1217q10 2 18 2h287q10 0 18-2v18H368z" fill="#fff"/><path d="M368 998h323v237H368z" fill="none" stroke="#7fb4f8" stroke-width="1.4"/>
              <g fill="none" stroke="#555"><circle cx="405" cy="1134" r="9.500"/><circle cx="405" cy="1134" r="4"/></g>
              <path d="M400.500 1235.500h258v128h-258z" fill="url(#cg)" stroke="#7e858d"/><path d="M527 1236h5" stroke="#a01020" stroke-width="2"/>
              <path d="M148.500 1328v45h45" class="ax"/><text x="152" y="1330" class="axt">z</text><text x="197" y="1376" class="axt">x</text>
            </svg>
          </div>
          <div class="vp">
            <div class="vlabel">Right<i></i></div>
            <svg viewBox="1096 850 997 577">
              <path d="M1438.500 1112.500h250v250h-250z" fill="url(#cg)" stroke="#7e858d"/>
              <path d="M1489 1009h249.500v229h-350v-18C1440 1211 1470 1206 1487 1201 1500 1196 1502 1190 1503 1185L1537 1068C1540 1058 1532 1050 1525 1042z" fill="#fff" stroke="#8fbdf8" stroke-width="1.5"/>
              <path d="M1570 1239h5" stroke="#a01020" stroke-width="2"/>
              <path d="M1150.500 1328v45h45" class="ax"/><text x="1153" y="1330" class="axt">z</text><text x="1199" y="1373" class="axt">y</text>
            </svg>
          </div>
        </div>
      </div>
      <div class="vtabs"><span class="on">Perspective</span><span>Top</span><span>Front</span><span>Right</span><svg width="16" height="16"><path d="M5.500 1.500h4v4h4v4h-4v4h-4v-4h-4v-4h4z" fill="#fff" stroke="#888"/></svg></div>
      <div class="osnap"><span class="c">End</span><span class="c">Near</span><span class="c">Point</span><span class="c">Mid</span><span class="c">Cen</span><span class="c">Int</span><span>Perp</span><span>Tan</span><span class="c">Quad</span><span class="c">Knot</span><span class="c">Vertex</span><span class="d">Project</span><span class="d">Disable</span></div>
    </div>

    <aside class="r-right">
      <div class="p-head"><span>Rendering</span><hr></div>
      <div class="p-tabs">
        <span><svg viewBox="0 0 22 22"><g fill="none" stroke-width="5"><path d="M11 3a8 8 0 0 1 7 4" stroke="#ff9a00"/><path d="M18 7a8 8 0 0 1-1 9" stroke="#e8e000"/><path d="M17 16a8 8 0 0 1-7 3" stroke="#20d040"/><path d="M11 19a8 8 0 0 1-7-5" stroke="#00b8f0"/><path d="M4 14a8 8 0 0 1 1-8" stroke="#4030f0"/><path d="M5 6a8 8 0 0 1 6-3" stroke="#f020c0"/></g></svg></span>
        <span class="on"><svg viewBox="0 0 24 24"><circle cx="11" cy="14" r="9" fill="url(#gB)"/><path d="M9 7l6-5h8v5l-6 2-4 3z" fill="#ddd" stroke="#222"/></svg></span>
        <span><svg viewBox="0 0 24 24"><path d="M3 17L15 4q4-3 6-1t0 5L9 21q-4 2-6 0t0-4z" fill="#eee" stroke="#333"/><path d="M10 10l5-5 5 5-5 5z" fill="#e8501c"/></svg></span>
        <span><svg viewBox="0 0 24 24"><path d="M2 20V5h6l2 3h10v3" fill="#f0c040" stroke="#6a4c08"/><path d="M2 20l4-9h17l-4 9z" fill="#ffd860" stroke="#6a4c08"/></svg></span>
        <span><svg viewBox="0 0 24 24"><path d="M1 2h22v20H1z" fill="#dfe6ff" stroke="#334a90" stroke-width="1.500"/><path d="M1 2h22v4H1z" fill="#28307a"/><ellipse cx="12" cy="15" rx="9" ry="6" fill="#4060d8"/><text x="9" y="19" font-size="11" font-weight="700" fill="#fff">?</text></svg></span>
        <span><svg viewBox="0 0 24 24"><path d="M12 5l7 4v7l-7 4-7-4V9z" fill="#555"/><path d="M12 7l5 3v5l-5 3-5-3v-5z" fill="#e0b030"/><path d="M12 0l3 3H9zM12 24l3-3H9zM0 12l3-3v6zM24 12l-3-3v6z" fill="#222"/></svg></span>
        <span class="g"><svg viewBox="0 0 22 22" fill="none" stroke="#c0c6d6"><circle cx="11" cy="11" r="9" stroke-width="2" stroke-dasharray="4 3"/><circle cx="11" cy="11" r="7.500"/><circle cx="11" cy="11" r="2.500" stroke-width="1.500"/></svg></span>
      </div>
      <div class="p-body">
        <div class="p-scroll">
          <div class="sec closed">Current Renderer<hr></div>
          <div class="sec">View<hr></div>
          <div class="row r-view"><span class="combo white"><svg width="25" height="23"><rect x="1" y="1" width="23" height="21" rx="2" fill="#a4a4a4" stroke="#111" stroke-width="1.500"/><path d="M2 2h7v3H2z" fill="#3050c8"/></svg>Current Viewport</span></div>
          <div class="sec">Resolution and Quality<hr></div>
          <div class="row r-dim"><label>Dimensions:</label><span class="combo">Custom: 800 x 450 (16:9)</span></div>
          <div class="row r-lock"><i class="box"></i><label>Lock to viewport aspect ratio (1.72:1)</label></div>
          <div class="row r-size"><label>Size:</label><span class="num">800</span><label>x</label><span class="num">450</span><span class="combo px">pixels</span></div>
          <div class="row r-dpi"><label>DPI:</label><span class="num">72</span></div>
          <div class="row r-q"><label>Quality:</label><span class="combo">Draft quality</span></div>
          <div class="sec">Backdrop<hr></div>
          <div class="stub"></div>
        </div>
        <div class="track"><i></i></div>
      </div>
      <div class="p-foot">
        <span class="btn reset"><svg width="38" height="30" viewBox="0 0 38 30" fill="none" stroke="#e00c0c" stroke-width="3.600"><path d="M5 3h11M4 5L3 14M17 5l-1 9M3 16l-1 9M16 16l-1 9M3 27h11M24 3h11M23 5l-1 9M36 5l-1 9M22 16l-1 9M35 16l-1 9M22 27h11"/></svg>Reset To Defaults</span>
        <span class="btn render"><svg width="33" height="33" viewBox="0 0 33 33"><circle cx="16" cy="16" r="15" fill="url(#gB)" stroke="#112"/></svg>Render</span>
      </div>
      <div class="rules"></div>
      <div class="l-tab"><svg class="l-out" width="458" height="36"><path d="M1 35V5l4-4h73l35 31h344" fill="none" stroke="#b8c0da" stroke-width="1.500"/></svg><svg width="24" height="24" viewBox="0 0 24 24"><path d="M1 11l10 12 12-4v-9L11 15z" fill="#2038a0" stroke="#111"/><path d="M1 8l10 10 12-4v-4L11 13z" fill="#fff"/><path d="M1 1l22 3v6l-12 5L1 6z" fill="#f07040" stroke="#111"/></svg><span>Layers</span><svg class="lg" width="22" height="22" fill="none" stroke="#c0c6d6"><circle cx="11" cy="11" r="9" stroke-width="2" stroke-dasharray="4 3"/><circle cx="11" cy="11" r="7.500"/><circle cx="11" cy="11" r="2.500" stroke-width="1.500"/></svg></div>
      <div class="l-panel">
        <div class="l-tools">
          <svg viewBox="0 0 24 24"><path d="M4 1h11l5 5v17H4z" fill="#fff" stroke="#111" stroke-width="1.600"/><path d="M15 1v5h5" fill="none" stroke="#111"/></svg>
          <svg viewBox="0 0 24 24" fill="#c4c4c4" stroke="#888"><path d="M2 2h8l4 3v12H2z"/><path d="M9 8h8l5 4v10H9z"/></svg>
          <svg viewBox="0 0 24 24"><path d="M2 2l20 20M22 2L2 22" stroke="#b0b0b0" stroke-width="3.500"/></svg>
          <svg viewBox="0 0 24 24"><path d="M2 18l10-12 10 12z" fill="#bcbcbc" stroke="#888"/></svg>
          <svg viewBox="0 0 24 24"><path d="M2 6l10 12L22 6z" fill="#bcbcbc" stroke="#888"/></svg>
          <svg viewBox="0 0 24 24"><path d="M18 2L5 12l13 10z" fill="#b0b0b0" stroke="#888"/></svg>
          <svg viewBox="0 0 26 24"><path d="M3 2h18l-6 9v11l-5-3v-8z" fill="#5f82e8" stroke="#112"/><path d="M26 19v5h-6z"/></svg>
          <svg viewBox="0 0 26 24"><path d="M4 1h12l5 5v17H4z" fill="#c8c8c8" stroke="#999"/><path d="M26 19v5h-6z" fill="#888"/></svg>
          <svg viewBox="0 0 26 24"><path d="M2 22L13 9" stroke="#15307a" stroke-width="4"/><path d="M7 3q8-4 14 5l-3 3q-5-6-10-5z" fill="#777" stroke="#222"/><path d="M26 19v5h-6z"/></svg>
          <svg viewBox="0 0 24 24"><circle cx="12" cy="12" r="11" fill="#3c5cd0"/><text x="8" y="18" font-size="17" font-weight="700" fill="#fff">?</text></svg>
        </div>
        <div class="l-table">
          <div class="l-head"><span>Layer</span><span></span><span></span><span></span><span></span><span>Material</span><span>Linetype</span><span></span><span>Print W...</span></div>
          <div class="l-row"><span>Default</span><span><svg width="20" height="16"><path d="M1 9l5 5L19 1" stroke="#111" fill="none" stroke-width="2"/></svg></span><span></span><span></span><span><i></i></span><span></span><span>Conti...</span><span><svg width="20" height="20"><path d="M10 0l9 10-9 10L1 10z"/></svg></span><span>Default</span></div>
        </div>
      </div>
    </aside>
  </div>

  <footer class="status"><span>CPlane</span><span>x -219.730</span><span>y 81.964</span><span>z</span><span>Millimeters</span><span class="lay"><i></i>Default</span><span class="on">Grid Snap</span><span>Ortho</span><span class="on">Planar</span><span class="on">Osnap</span><span class="on">SmartTrack</span><span class="on">Gumball</span><span>Record History</span><span>Filter</span><span class="mem">Memory use: 1004 MB</span></footer>

  <div class="taskbar">
    <div class="weather"><svg width="38" height="40" viewBox="0 0 38 40"><path d="M26 4q10 6 9 18-3 14-18 14-8 0-12-6 20 2 21-26z" fill="#f29a20"/><path d="M5 16q-6-8 2-10 3-7 10-3 8 1 5 10-1 4-5 3z" fill="#9cc0f4"/></svg><div><p>58°F</p><p class="dim">Mostly clear</p></div></div>
    <svg class="logo" width="35" height="36" viewBox="0 0 35 36"><path d="M0 0h17v17H0zM18 0h17v17H18zM0 18.500h17V36H0zM18 18.500h17V36H18z" fill="url(#win)"/></svg>
    <div class="search"><svg width="26" height="26" fill="none" stroke="#222" stroke-width="2.500"><circle cx="11" cy="11" r="8"/><path d="M17 17l7 7"/></svg><span>Search</span><svg width="70" height="36" viewBox="0 0 64 34"><path d="M2 13Q16 2 28 10q14 6 24 6 10-2 7-8l-4-4q10 4 6 12-10 6-18 5-8 2-13 10-8-4-10-12Q8 18 2 13z" fill="#8c93b4"/><path d="M18 20q8 2 20 0-6 4-8 9-8-3-12-9z" fill="#d9c8b0"/><circle cx="5" cy="27" r="4" fill="#b8e4ea"/><circle cx="36" cy="5" r="4" fill="#b8e4ea"/></svg></div>
    <div class="apps">
      <svg viewBox="0 0 36 36"><path d="M9 1h26v24H9z" fill="#f4f4f4"/><path d="M1 11h25v24H1z" fill="#2a2a2a"/><path d="M9 11h17v14H9z" fill="#aaa"/></svg>
      <svg viewBox="0 0 36 36"><path d="M12 1h10q3 0 4 4l1 4h-7q-3 0-4 5l-3 9H6q-6 0-5-6L6 5q2-4 6-4z" fill="url(#cop1)"/><path d="M24 35H14q-3 0-4-4l-1-5h7q3 0 4-4l3-10h7q6 0 5 6l-5 13q-2 4-6 4z" fill="url(#cop2)"/></svg>
      <svg viewBox="0 0 36 36"><path d="M17 1q3-1 5 1l9 6q2 1 2 4v13l-9-5v-7l-7-5z" fill="#58a4f0"/><path d="M33 20v5q0 3-3 4l-9 6q-3 1-6 0l-8-5 12-5 6-5z" fill="#9458cc"/><path d="M17 1l1 8-6 5v9l7 4-10 4-5-4q-1-1-1-4V12q0-3 2-4z" fill="#3a5ccc"/></svg>
      <svg viewBox="0 0 36 36"><path d="M1 2h12l3 4v4H1z" fill="#e0a008"/><path d="M1 6h34v28H1z" fill="#ffd04a"/><path d="M7 26q0-3 3-3h17q3 0 3 3v9H7z" fill="#0b78d0"/><path d="M12 29h13" stroke="#064a8a" stroke-width="2"/></svg>
      <svg viewBox="0 0 36 36"><circle cx="18" cy="18" r="18" fill="#fbbc05"/><path d="M18 18L2.400 9A18 18 0 0 1 33.600 9z" fill="#ea4335"/><path d="M18 18L2.400 9A18 18 0 0 0 18 36l8-13.500z" fill="#34a045"/><circle cx="18" cy="18" r="9" fill="#fff"/><circle cx="18" cy="18" r="7" fill="#1a73e8"/></svg>
      <span class="active"><i></i></span>
    </div>
    <div class="tray">
      <svg viewBox="0 0 24 24"><path d="M5 16l7-8 7 8" fill="none" stroke="#222" stroke-width="2"/></svg>
      <svg viewBox="0 0 28 24"><path d="M2 10v5M6 7v10M10 9v7M14 1v22M18 5v14M22 8v8M26 9v5" stroke="#e83468" stroke-width="2.200"/></svg>
      <svg viewBox="0 0 24 24"><rect x="1" y="4" width="22" height="17" rx="3" fill="none" stroke="#222" stroke-width="1.800"/><path d="M5 9h15M5 13h15" stroke="#222" stroke-width="2" stroke-dasharray="2 2"/><path d="M7 17h10" stroke="#222" stroke-width="2"/></svg>
      <svg viewBox="0 0 24 24" fill="none" stroke="#222" stroke-width="2"><rect x="1" y="4" width="22" height="17" rx="3"/><path d="M1 14h22M12 14v7"/></svg>
      <span class="cjk">中</span><span class="cjk">拼</span>
      <svg viewBox="0 0 24 24" fill="none" stroke="#222" stroke-width="1.800"><path d="M1 10q11-9 22 0M4 13q8-6 16 0M7.500 16q4.500-3 9 0"/><circle cx="12" cy="19" r="1.500" fill="#222"/></svg>
      <svg viewBox="0 0 24 24" fill="none" stroke="#222" stroke-width="1.800"><path d="M1 9h4l6-5v16l-6-5H1zM15 8l8 8M23 8l-8 8"/></svg>
      <svg viewBox="0 0 24 24"><rect x="2" y="6" width="18" height="13" rx="3" fill="none" stroke="#222" stroke-width="1.800"/><path d="M4 9h14v8H4zM21 10h3v5h-3z" fill="#222"/><path d="M5 1L0 9h4l-1 5 6-8H5z" fill="#222" stroke="#ddd" stroke-width=".6"/></svg>
    </div>
    <div class="clock"><p>3:30 AM</p><p>9/9/2024</p></div>
    <svg class="bell" width="22" height="26" viewBox="0 0 22 26"><path d="M11 1q8 0 8 9v6l2 4v1H1v-1l2-4v-6q0-9 8-9z" fill="#004494"/><path d="M7 22.500h8q-1 3-4 3t-4-3z" fill="#004494"/></svg>
  </div>
</section>

<section class="gh">
  <header class="g-title"><span>Grasshopper - CellPhoneStand_2024 - Copy*</span><div class="g-btns"><svg width="16" height="16"><path d="M1 8h14" stroke="#999" stroke-width="1.400"/></svg><svg width="16" height="16"><rect x="1" y="1" width="14" height="14" rx="2" fill="none" stroke="#999" stroke-width="1.400"/></svg><svg width="16" height="16"><path d="M1 1l14 14M15 1L1 15" stroke="#999" stroke-width="1.400"/></svg></div></header>
  <nav class="g-menu"><span>File</span><span>Edit</span><span>View</span><span>Display</span><span>Solution</span><span>Help</span><span class="doc">CellPhoneStand_2024 - Copy</span></nav>
  <nav class="g-tabs"><span>Params</span><span>Maths</span><span>Sets</span><span>Vector</span><span>Curve</span><span class="on">Surface</span><span>Mesh</span><span>Intersect</span><span>Transform</span><span>Display</span><span>Firefly</span><span>Wb</span><span>Kangaroo2</span><span>LunchBox</span><span>V-Ray</span><span>LunchBoxML</span></nav>
  <div class="ribbon">
    <div class="grp g5"><div class="cells">
      <svg viewBox="0 0 32 32"><path d="M3 8l13-6 13 6v14l-13 8-13-8z" fill="#f4f4f4" stroke="#666"/><path d="M16 14v16l13-8V8z" fill="#b8b8b8"/><path d="M3 8l13 6 13-6M16 14v16" fill="none" stroke="#e85a10" stroke-width="4"/></svg>
      <b class="mm">m<sup>2</sup></b>
      <svg viewBox="0 0 32 32"><path d="M11 12l14-5q7 8 2 18l-7 5q-8-5-9-18z" fill="url(#lO)" stroke="#8a3c00" stroke-width="1.600"/><path d="M4 4l8 10" stroke="#333"/><circle cx="4" cy="4" r="2.500" fill="#fff" stroke="#222"/><circle cx="4" cy="14" r="2.500" fill="#fff" stroke="#222"/></svg>
      <svg viewBox="0 0 32 32"><rect x="2" y="3" width="20" height="26" rx="7" fill="url(#lG)" stroke="#777"/><path d="M8 12l7 9M15 12l-7 9" stroke="#20a030" stroke-width="2.500"/><path d="M25 13l6 7M31 13l-6 7" stroke="#b02020" stroke-width="2"/></svg>
      <svg viewBox="0 0 32 32"><path d="M3 24q1-13 12-12 11 0 13 12-13 10-25 0z" fill="url(#lO)" stroke="#a04000" stroke-width="1.500"/><path d="M18 14L27 3" stroke="#111" stroke-width="2"/><circle cx="18" cy="14" r="3" fill="#fff" stroke="#111"/></svg>
      <svg viewBox="0 0 32 32"><path d="M3 10l4 2 2-10 5 9 3-10 4 10 6-8v9q5 12-2 16-12 8-22 0-4-9 0-18z" fill="#d84a10" stroke="#6a1c00"/><circle cx="16" cy="18" r="9" fill="url(#lG)" stroke="#422"/></svg>
      <b class="mm">m<sup>3</sup></b>
      <svg viewBox="0 0 32 32"><path d="M2 17L28 7v22L2 25z" fill="url(#lO)" stroke="#8a2c00" stroke-width="1.600"/><path d="M20 4v20" stroke="#222"/><circle cx="20" cy="4" r="2.500" fill="#fff" stroke="#222"/><circle cx="20" cy="23" r="2.500" fill="#fff" stroke="#222"/></svg>
      <svg viewBox="0 0 32 32"><path d="M3 8l10-6 12 4 6 8-4 15-20 1-4-8z" fill="#e8e8e8" stroke="#777"/><path d="M7 7l8-5v22l-8 6z" fill="#ffb030" stroke="#7a3c00"/><path d="M15 2l6 2v22l-6-2z" fill="#e06a00"/></svg>
      <svg viewBox="0 0 32 32"><path d="M2 13q7 3 14-7 6 9 14 8v13q-14-6-28-1z" fill="#e01870"/><path d="M2 18q14-2 28 8v1q-14-6-28-1z" fill="#5078e0"/></svg>
    </div><footer>Analysis<i>+</i></footer></div>
    <div class="grp g3"><div class="cells">
      <svg viewBox="0 0 32 32"><path d="M5 5l15 5 7 17-17-3z" fill="url(#lO)" stroke="#8a3c00"/><g fill="#fff" stroke="#111"><circle cx="5" cy="4" r="2.500"/><circle cx="21" cy="10" r="2.500"/><circle cx="28" cy="28" r="2.500"/></g></svg>
      <svg viewBox="0 0 32 32"><path d="M5 4q10 2 12 12l12 2q-6 6-8 11H5z" fill="url(#lO)" stroke="#a02c00" stroke-width="1.600"/><path d="M3 27h4v4H3zM27 16h4v4h-4z" fill="#fff" stroke="#111"/></svg>
      <svg viewBox="0 0 32 32"><path d="M4 30L29 3" stroke="#222" stroke-width="3"/><path d="M4 20L18 4l10 6L14 27z" fill="url(#lO)" stroke="#a04000"/></svg>
      <svg viewBox="0 0 32 32"><path d="M4 4h24v24H4z" fill="url(#lO)" stroke="#7a3c00" stroke-width="1.600"/><path d="M12 4v24M20 4v24M4 18l24-6" stroke="#7a3c00"/><g fill="#fff" stroke="#111"><circle cx="4" cy="4" r="2"/><circle cx="28" cy="4" r="2"/><circle cx="16" cy="16" r="2"/><circle cx="4" cy="28" r="2"/><circle cx="28" cy="28" r="2"/></g></svg>
      <svg viewBox="0 0 32 32"><path d="M3 4q6 6 2 12 0 8 4 14h18q5-6 0-13 4-6 0-13z" fill="url(#lO)"/><path d="M4 2q6 7 1 14 0 8 4 14M13 2q6 7 1 14 0 8 4 14M23 2q6 7 1 14 0 8 4 14" stroke="#111" fill="none" stroke-width="2.500"/></svg>
      <svg viewBox="0 0 32 32"><path d="M4 29Q6 12 18 9l9 5q-9 3-10 15z" fill="url(#lO)" stroke="#a04000"/><path d="M7 17Q11 8 18 8l-2-6 14 2-4 12-4-4q-6 0-11 8z" fill="#111"/></svg>
    </div><footer>Freeform<i>+</i></footer></div>
    <div class="grp g2"><div class="cells">
      <svg viewBox="0 0 32 32"><path d="M4 9l12-7 12 6v15l-12 7-12-6z" fill="url(#lY)" stroke="#8a5400" stroke-width="1.600"/><g fill="#fff" stroke="#222"><circle cx="10" cy="14" r="2"/><circle cx="12" cy="23" r="2"/><circle cx="22" cy="18" r="2"/><circle cx="16" cy="6" r="2"/><circle cx="25" cy="11" r="2"/></g></svg>
      <svg viewBox="0 0 32 32"><path d="M6 6q10-5 20 0v20q-10 6-20 0z" fill="url(#lO)" stroke="#8a3c00"/><ellipse cx="16" cy="6.500" rx="10" ry="3.500" fill="#ffd060" stroke="#8a3c00"/></svg>
      <svg viewBox="0 0 32 32"><path d="M4 12L16 2l12 9-9 10H8z" fill="url(#lY)" stroke="#8a5400" stroke-width="1.500"/><path d="M15 17h13v12H15zM15 21h13M15 25h13M19 17v12M24 17v12" fill="#fff" stroke="#444"/></svg>
      <svg viewBox="0 0 32 32"><circle cx="16" cy="16" r="12" fill="url(#gO)" stroke="#a05000"/></svg>
    </div><footer>Primitive<i>+</i></footer></div>
    <div class="grp g2"><div class="cells">
      <svg viewBox="0 0 32 32"><rect x="2" y="2" width="28" height="28" rx="9" fill="#aaa" stroke="#555"/><path d="M17 2h4q9 2 9 10v8q0 8-9 10h-4z" fill="#f59a1c"/><path d="M16 2v28M22 3v26M16 9h13M16 16h14M16 23h13" stroke="#a03000"/><path d="M2 15h14" stroke="#eee" stroke-width="1.500"/></svg>
      <svg viewBox="0 0 32 32"><path d="M6 1l6 2 2 9 16-4v7l-14 6-7 10-6-3 5-11z" fill="#e8b020" stroke="#6a4c00" stroke-width="1.600"/><path d="M5 12l8 4M20 10l2 8M8 22l6 3" stroke="#6a4c00"/></svg>
      <svg viewBox="0 0 32 32"><rect x="2" y="2" width="28" height="28" rx="10" fill="url(#gO)" stroke="#5a2c00" stroke-width="1.600"/><path d="M16 2v28M2 14q14 4 28 0" stroke="#5a2c00" fill="none" stroke-width="1.500"/></svg>
      <svg viewBox="0 0 32 32" fill="#c89018" stroke="#5a3c00" stroke-width="1.500"><rect x="13" y="2" width="17" height="17" rx="7"/><rect x="2" y="12" width="18" height="18" rx="8"/><path d="M11 12v18M2 21h18M21 2v17M13 10h17" /></svg>
    </div><footer>SubD<i>+</i></footer></div>
    <div class="grp g3"><div class="cells">
      <svg viewBox="0 0 32 32"><path d="M8 4h21l-5 25H3z" fill="url(#lO)" stroke="#222" stroke-width="2"/><path d="M18 4l-5 25M5 16h21" stroke="#7a1c00"/><g fill="#fff" stroke="#111"><circle cx="8" cy="4" r="2"/><circle cx="28" cy="4" r="2"/><circle cx="16" cy="16" r="2"/><circle cx="4" cy="28" r="2"/><circle cx="24" cy="28" r="2"/></g></svg>
      <svg viewBox="0 0 32 32"><path d="M3 8h11v17H3zM18 8h11v17H18z" fill="url(#lO)"/><path d="M16 2v7M10 2l3 5M22 2l-3 5M16 31v-7M10 31l3-5M22 31l-3-5" stroke="#e06a5a" stroke-width="1.500"/><path d="M2 17h10M20 17h10M8 13l5 4-5 4M24 13l-5 4 5 4" stroke="#111" stroke-width="1.800" fill="none"/></svg>
      <svg viewBox="0 0 32 32"><path d="M5 6h19v18H5z" fill="#ddd" stroke="#444"/><path d="M5 16V5h19" stroke="#d02020" stroke-width="3" fill="none"/><g fill="#fff" stroke="#111" stroke-width="1.500"><circle cx="5" cy="5" r="2.500"/><circle cx="5" cy="17" r="2.500"/><circle cx="28" cy="27" r="2.500"/></g></svg>
      <svg viewBox="0 0 32 32"><path d="M9 5h18l-5 23H4z" fill="url(#lO)"/><path d="M6 2h6v6H6zM23 2h6v6h-6zM8 13h6v6H8zM20 13h6v6h-6zM3 25h6v6H3zM19 25h6v6h-6z" fill="#fff" stroke="#111" stroke-width="1.500"/></svg>
      <svg viewBox="0 0 32 32"><path d="M6 15l10-4 9 4v10l-9 5-10-5z" fill="#888" stroke="#555"/><path d="M6 15l10 4 9-4-9-4z" fill="#ddd"/><path d="M12 3l13-1-3 8-14 2z" fill="#f07020" stroke="#a03000"/></svg>
      <svg viewBox="0 0 32 32"><path d="M3 9L14 2l15 14v5l-6 9H3z" fill="url(#lY)" stroke="#7a3c00" stroke-width="2"/><path d="M10 11l10 12M10 17v-6h5M14 23h6v-6" stroke="#111" fill="none" stroke-width="1.500"/></svg>
    </div><footer>Util<i>+</i></footer></div>
  </div>
  <div class="g-bar">
    <svg viewBox="0 0 32 32"><path d="M5 3l8-2h8l4 4v12H5z" fill="#f4f4f4" stroke="#888"/><path d="M3 30V17h9l3-5h14v18z" fill="#78c838" stroke="#3a7a10"/></svg>
    <svg viewBox="0 0 32 32"><path d="M1 1h30v30H5l-4-4z" fill="#1c66e8" stroke="#0a2c80"/><path d="M6 2h20v12H6z" fill="#e4e9f4"/><path d="M8 19h15v11H8z" fill="#c0c8d8"/><path d="M11 21h4v8h-4z" fill="#1440a0"/></svg>
    <hr>
    <span class="zoom">176%<svg width="12" height="8"><path d="M1 1l5 5 5-5" fill="none" stroke="#555"/></svg></span>
    <svg viewBox="0 0 32 32" fill="none" stroke="#222" stroke-width="5"><path d="M3 11V3h8M21 3h8v8M3 21v8h8M21 29h8v-8"/><path d="M13 13l6 6M19 13l-6 6" stroke-width="2.500"/></svg>
    <em></em>
    <svg viewBox="0 0 36 32"><path d="M1 16Q18-6 35 16 18 38 1 16z" fill="#f4f8fa" stroke="#4a6a80" stroke-width="2"/><circle cx="18" cy="15" r="9" fill="#40a8dc" stroke="#1c5c8c"/><circle cx="18" cy="15" r="4"/></svg>
    <em></em>
    <svg viewBox="0 0 36 34"><path d="M3 8q8-4 5 8-6 14 5 14l8-3" fill="none" stroke="#632" stroke-width="2"/><path d="M13 22L31 2q4 10-5 20l-9 8z" fill="#e0303a" stroke="#922"/><path d="M12 23l6 7-9 2z" fill="#c87820"/></svg>
    <div class="g-right">
      <svg viewBox="0 0 32 32"><path d="M8 6l8-4 9 3v9l-8 5-9-3z" fill="#ccc" stroke="#888"/><ellipse cx="16" cy="23" rx="10" ry="7" fill="#333"/></svg>
      <svg viewBox="0 0 32 32"><path d="M3 16L16 2l14 5-1 11-13 13-12-5z" fill="#eee" stroke="#555" stroke-width="1.500"/><circle cx="21" cy="11" r="6" fill="none" stroke="#888"/><circle cx="11" cy="22" r="6" fill="none" stroke="#888"/></svg>
      <svg class="sel" viewBox="0 0 32 32"><path d="M3 16L14 3q9-1 15 5l-1 10-11 12q-8 1-13-5z" fill="#c81c10" stroke="#700"/><path d="M14 4q8-1 13 4-4 4-13 1z" fill="#f06050"/></svg>
      <hr>
      <svg viewBox="0 0 32 32"><path d="M2 2q14 2 12 14l-3 12q14 4 18-6V8q-8-6-14-3z" fill="#189a98" stroke="#0a5a5a"/><ellipse cx="22" cy="9" rx="7" ry="4" fill="#60d0c8"/></svg>
      <svg viewBox="0 0 32 32"><path d="M3 16l14-6 4 18-8 2-9-5z" fill="#ccc" stroke="#888"/><path d="M2 5l12 4 10-7 6 6v10l-9 8-8-11z" fill="#58a818" stroke="#2c5c08"/></svg>
      <svg viewBox="0 0 32 32"><circle cx="16" cy="16" r="13" fill="url(#gL)" stroke="#777"/><path d="M16 3a13 13 0 0 0 0 26z" fill="#e8941c"/></svg>
      <hr>
      <svg viewBox="0 0 32 32"><path d="M9 3h13l8 9-2 12-9 6-12-3-5-11z" fill="#8cbcf4" stroke="#2c60b0" stroke-width="1.500"/><path d="M9 4h12l3 9-12 4-8-2z" fill="#c4defc"/></svg>
      <em></em>
    </div>
  </div>
  <svg id="canvas" class="canvas" viewBox="3 1895 3826 805" width="3826" height="805"></svg>
</section>
</div>
<script src="canvas.js"></script>
</body>
</html>
```
FILE: styles.css
```css
* { box-sizing: border-box; }
body { margin: 0; font-family: "Noto Sans", "Open Sans", "Noto Sans CJK SC", sans-serif; font-size: 16.8px; color: #111; background: #fff; }
p, hr { margin: 0; }
svg { display: block; flex: none; }
.defs { position: absolute; }
.screen { width: 3840px; height: 2700px; overflow: hidden; display: grid; grid-template-rows: 1602px 1098px; background: linear-gradient(#fff 1600px, #2a2730 1600px, #2a2730 1602px, #111 1602px); }
.rhino { width: 2560px; height: 1600px; display: flex; flex-direction: column; background: #e9ebef; overflow: hidden; }

.r-title { height: 34px; display: flex; align-items: center; gap: 6px; padding: 0 29px 0 2px; background: linear-gradient(90deg, #f3f3f3, #f1f1f1 40%, #f4f0f6); flex: none; white-space: nowrap; }
.wbtns { margin-left: auto; display: flex; gap: 53px; align-items: center; }
.r-menu { height: 28px; flex: none; background: #fff; display: grid; grid-template-columns: 49px 51px 59px 67px 81px 65px 62px 66px 106px 102px 62px 84px 76px 71px 69px 60px; padding: 2px 0 0 11px; align-items: center; white-space: nowrap; font-size: 16.3px; }
.cmd { height: 101px; flex: none; padding: 5px 5px 3px 8px; display: flex; gap: 4px; border-bottom: 1px solid #cdd3e2; font-size: 18.4px; }
.cmd-box { width: 2527px; background: #fff; border-left: 1px solid #c8cfe2; display: flex; flex-direction: column; }
.hist { height: 65px; border-bottom: 2px solid #bcc3dc; overflow: hidden; display: flex; flex-direction: column; justify-content: flex-end; padding-left: 2px; }
.hist p { line-height: 24px; flex: none; white-space: nowrap; }
.prompt { display: flex; align-items: center; height: 25px; padding-left: 2px; gap: 3px; }
.prompt i { width: 1px; height: 22px; background: #000; }
.spin2 { align-self: flex-end; }
.r-tabs { height: 34px; flex: none; padding-left: 29px; display: grid; grid-template-columns: 111px 99px 107px 98px 84px 168px 102px 119px 129px 143px 124px 129px 128px 142px 104px 1fr 26px; align-items: center; color: #33363c; border-bottom: 1.5px solid #b8c0da; white-space: nowrap; padding-top: 6px; font-size: 16.6px; }
.r-tabs .on { position: relative; z-index: 0; }
.r-tabs .on svg { position: absolute; left: -36px; top: -4px; z-index: -1; }
.r-icons { height: 71px; flex: none; display: flex; gap: 8.3px; padding: 5px 0 0 14px; }
.r-icons svg { width: 34px; height: 34px; padding: 1px; }
.r-icons .hl-b { background: linear-gradient(135deg, #cdd8ff, #f2f5ff); }
.r-icons .hl-g { background: #cfcfcf; }
.r-icons .hl-y { background: #e5dcc8; }

.r-main { height: 1235px; flex: none; display: flex; }
.r-left { width: 2094px; display: flex; flex-direction: column; }
.r-work { height: 1160px; display: flex; }
.tools { width: 93px; padding: 9px 0 0 0; display: grid; grid-template-columns: 43px 43px; grid-auto-rows: 42px; align-content: start; background: linear-gradient(#c5cde0, #c5cde0) 3px 3px / 84px 1px no-repeat, linear-gradient(#c5cde0, #c5cde0) 3px 6px / 84px 1px no-repeat; }
.tools span { display: grid; place-items: center; position: relative; }
.tools svg { width: 30px; height: 32px; }
.tools .m::after { content: ""; position: absolute; right: 2px; bottom: 2px; width: 9px; height: 9px; background: #777; clip-path: polygon(100% 0, 100% 100%, 0 100%); }
.views { width: 2001px; display: grid; grid-template-columns: 998px 999px; grid-template-rows: 579px 578px; gap: 3px 4px; }
.vp { position: relative; background: #9ca3ab; border: 1px solid #c0c7da; overflow: hidden; }
.vp > svg { width: 100%; height: 100%; }
.ax { fill: none; stroke: #5d6169; stroke-width: 1.3; }
.axt { font-size: 19px; fill: #5d6169; }
.vlabel { position: absolute; left: 0; top: 0; z-index: 1; height: 27px; background: #c8ccd3; color: #5c5f67; font-weight: 700; padding-left: 10px; display: flex; align-items: center; gap: 9px; border-radius: 0 0 4px 0; }
.vlabel i { width: 17px; height: 23px; border-left: 1.5px solid #666; position: relative; }
.vlabel i::after { content: ""; position: absolute; left: 2px; top: 7px; border: 6px solid transparent; border-top: 8px solid #555; border-bottom: 0; }
.vlabel.act { background: #869cf0; color: #22252e; }
.vtabs { height: 38px; display: flex; padding-left: 93px; gap: 24px; align-items: center; color: #222; font-size: 16.3px; }
.vtabs .on { height: 33px; width: 111px; align-self: flex-start; display: grid; place-items: center; border-right: 1.5px solid #c0c8dc; border-bottom: 1.5px solid #c0c8dc; margin-right: -8px; padding-left: 6px; }
.osnap { height: 37px; display: grid; grid-template-columns: 66px 73px 77px 67px 66px 57px 72px 64px 80px 73px 86.5px 101.5px 100px; padding-left: 13px; align-items: center; border-left: 1px solid #c8cfe2; font-size: 16.2px; }
.osnap span { display: flex; gap: 5px; align-items: center; }
.osnap span::before { content: ""; width: 20px; height: 20px; flex: none; border: 1.5px solid #666; border-radius: 4px; background: #f4f4f6; font-size: 13px; line-height: 18px; text-align: center; }
.osnap .c::before { content: "✓"; background: #0560b6; border-color: #0560b6; color: #fff; font-family: "DejaVu Sans"; }
.osnap .d::before { border-color: #ddd; background: #fff; }

.r-right { width: 466px; padding-left: 8px; display: flex; flex-direction: column; }
.p-head { height: 29px; display: flex; align-items: center; gap: 7px; padding-left: 5px; color: #222; padding-top: 2px; }
.p-head hr { flex: 1; height: 4px; border: solid #c5cde0; border-width: 1px 0; }
.p-tabs { height: 33px; display: grid; grid-template-columns: 65px 66px 65px 66px 66px 66px 1fr; border-bottom: 1.5px solid #b8c0da; }
.p-tabs span { display: grid; place-items: center; padding: 3px 0 0 4px; }
.p-tabs svg { width: 23px; height: 23px; }
.p-tabs .on { border: 1.5px solid #b8c0da; border-bottom: 0; height: 34px; background: #e9ebef; margin-bottom: -2px; padding: 2px 0 0 3px; }
.p-tabs .g { justify-items: end; padding-right: 1px; }
.p-body { height: 579px; width: 457px; border: solid #b8c0da; border-width: 0 1.5px; display: flex; overflow: hidden; }
.p-scroll { width: 431px; display: flex; flex-direction: column; color: #2b2d33; overflow: hidden; padding-top: 1px; }
.sec { height: 50px; flex: none; display: flex; align-items: center; gap: 6px; padding: 0 3px 0 13px; font-size: 19.3px; }
.sec::before { content: ""; width: 8px; height: 8px; margin: -4px 12px 0 4px; border: solid #222; border-width: 0 2px 2px 0; transform: rotate(45deg); }
.sec.closed::before { transform: rotate(-45deg); border-color: #888; margin: 0 15px 0 1px; }
.sec hr { flex: 1; border: 0; height: 2px; background: #2b2d33; margin-top: -4px; }
.row { flex: none; display: flex; align-items: center; white-space: nowrap; }
.combo { height: 33px; border: 1.5px solid #bcc4dc; background: #e9e9e9; display: flex; align-items: center; padding: 0 9px 0 5px; }
.combo::after { content: ""; margin-left: auto; width: 8px; height: 8px; margin-top: -5px; border: solid #555; border-width: 0 1.3px 1.3px 0; transform: rotate(45deg); }
.combo.white { width: 373px; height: 34px; background: #fff; color: #000; border-color: #bbb; padding-left: 2px; gap: 4px; }
.r-view { height: 97px; align-items: flex-start; padding: 10px 0 0 37px; }
.r-dim { height: 47px; padding-left: 28px; }
.r-dim .combo { width: 290px; margin-left: 8px; }
.r-dim label, .r-q label { width: 96px; padding-top: 4px; }
.r-lock { height: 50px; padding-left: 39px; gap: 8px; }
.r-lock label { padding-top: 3px; }
.box { width: 21px; height: 21px; border: 1.5px solid #333; background: #fff; }
.r-size { height: 45px; padding-left: 37px; }
.r-size label:first-child { width: 43px; }
.r-size label:nth-child(3) { width: 18px; text-align: center; }
.num { width: 80px; height: 38px; border: 1.5px solid #bcc4dc; background: linear-gradient(#bcc4dc, #bcc4dc) 60px 17px / 18px 1px no-repeat, linear-gradient(#bcc4dc, #bcc4dc) 60px 0 / 1px 100% no-repeat, #fff; display: flex; align-items: center; padding-left: 7px; position: relative; }
.num::after { content: ""; position: absolute; right: 7px; top: 8px; width: 6px; height: 19px; background: conic-gradient(from 135deg at 50% 0, #222 90deg, transparent 0) 0 0 / 6px 3px no-repeat, conic-gradient(from -45deg at 50% 100%, #222 90deg, transparent 0) 0 100% / 6px 3px no-repeat; }
.px { width: 145px; margin: -5px 0 0 8px; }
.r-dpi { height: 60px; padding-left: 38px; }
.r-dpi label { width: 39px; }
.r-q { height: 43px; padding-left: 30px; margin-bottom: 23px; }
.r-q label { width: 68px; }
.r-q .combo { width: 188px; }
.stub { flex: none; width: 226px; height: 10px; margin: 6px 0 0 190px; border: 1.5px solid #999fae; background: #fff; }
.track { flex: 1; background: #f0f0f0; border-left: 1px solid #fff; padding: 25px 6px; }
.track i { display: block; width: 11px; height: 174px; background: #858585; }
.p-foot { height: 73px; width: 457px; border: 1.5px solid #b8c0da; border-top: 1px solid #dadde6; display: flex; gap: 5px; padding: 8px 4px 0 73px; color: #2b2d33; white-space: nowrap; }
.btn { height: 56px; border: 1.5px solid #bcc4dc; display: flex; align-items: center; font-size: 16.4px; }
.reset { width: 225px; padding-left: 2px; gap: 27px; }
.render { width: 148px; padding-left: 3px; gap: 31px; }
.rules { height: 17px; margin-top: 5px; background: linear-gradient(#d3d8e6, #d3d8e6) 0 0 / 100% 1px no-repeat, linear-gradient(#c5cde0, #c5cde0) 0 6px / 100% 1px no-repeat, linear-gradient(#c5cde0, #c5cde0) 0 9px / 100% 1px no-repeat; }
.l-tab { height: 32px; margin-top: -5px; position: relative; display: flex; align-items: center; gap: 5px; padding: 6px 2px 0 7px; color: #222; }
.l-tab span { font-size: 16px; }
.l-out { position: absolute; left: 0; top: 0; }
.lg { margin-left: auto; }
.l-panel { width: 457px; height: 425px; border: solid #b8c0da; border-width: 0 1.5px 1.5px; }
.l-tools { height: 56px; display: flex; align-items: center; padding: 4px 0 0 13px; gap: 8.4px; border-bottom: 1.5px solid #b8c0da; }
.l-tools svg { width: 24px; height: 24px; }
.l-table { width: 451px; height: 367px; background: #fff; }
.l-head, .l-row { display: grid; grid-template-columns: 79px 25px 25px 25px 25px 80px 80px 25px 80px; height: 32px; align-items: stretch; color: #222; font-size: 16.3px; white-space: nowrap; }
.l-head span, .l-row span { display: flex; align-items: center; padding-left: 5px; padding-top: 2px; }
.l-head span { border-right: 1px solid #d8dce8; }
.l-row { font-weight: 700; border-bottom: 1px solid #eee; height: 29px; }
.l-row span:nth-child(1) { padding-left: 11px; }
.l-row span:nth-child(2), .l-row span:nth-child(5), .l-row span:nth-child(8) { padding-left: 3px; padding-top: 0; }
.l-row i { width: 18px; height: 18px; background: #000; }

.status { height: 26px; flex: none; border-top: 1.5px solid #b8c0da; display: grid; grid-template-columns: 74px 128px 128px 128px 128.5px 248.5px 101.5px 68px 70.5px 74px 114px 89.6px 144.4px 61px 995px; border-bottom: 2px solid #adadb2; color: #2b2d33; font-size: 16.6px; line-height: 22px; }
.status span { display: flex; align-items: center; justify-content: center; border-right: 1px solid #c0c8dc; white-space: nowrap; padding-top: 1px; }
.status .on { background: #cfd6ea; font-weight: 700; letter-spacing: -.3px; }
.status .lay { justify-content: flex-start; gap: 3px; padding-left: 4px; }
.status .lay i { width: 17px; height: 17px; background: #000; }
.status .mem { justify-content: flex-start; padding-left: 2px; }

.taskbar { height: 71px; flex: none; display: flex; align-items: center; background: linear-gradient(90deg, #d9d9da, #d8d8dc 30%, #dcd9e6 50%, #dad8e2 65%, #d8d8d9); }
.weather { width: 897px; display: flex; gap: 10px; padding-left: 28px; align-items: center; }
.weather p { line-height: 24px; }
.dim { color: #5a5a60; }
.search { margin-left: 20px; width: 327px; height: 45px; border-radius: 23px; background: #f4f3f7; border: 1px solid #c6c4cc; border-bottom-width: 2px; display: flex; align-items: center; padding: 0 6px 0 15px; gap: 13px; font-size: 18.6px; color: #5a5a60; }
.search svg:last-child { margin-left: auto; }
.apps { margin-left: 20px; display: flex; align-items: center; gap: 30px; }
.apps svg { width: 36px; height: 36px; }
.active { width: 57px; height: 57px; margin-left: -10px; border-radius: 6px; background: #ecebf2; border: 1px solid #d0ced8; display: flex; justify-content: center; align-items: flex-end; }
.active i { width: 24px; height: 5px; border-radius: 3px; background: #0078d4; }
.tray { width: 402px; margin-left: 319px; display: grid; grid-template-columns: 48px 48px 48px 48px 57px 57px 36px 36px 24px; align-items: center; }
.tray svg { width: 26px; height: 26px; }
.tray svg:first-child { margin-left: -1px; }
.cjk { font-size: 22px; line-height: 26px; font-family: "Noto Sans CJK SC", sans-serif; padding-left: 1px; }
.clock { width: 101px; text-align: right; line-height: 24px; }
.bell { margin-left: 11px; }

.gh { width: 3831px; height: 1098px; display: flex; flex-direction: column; background: #f0f0f0; border-radius: 10px 12px 0 0; overflow: hidden; border-left: 2px solid #6c6c70; }
.g-title { height: 43px; flex: none; background: #f3f3f3; display: flex; align-items: center; justify-content: space-between; padding: 0 27px 2px 11px; color: #939393; }
.g-btns { display: flex; gap: 54px; margin-right: 3px; }
.g-menu { height: 41px; flex: none; display: grid; grid-template-columns: 50px 55px 60px 82px 91px 1fr 240px; align-items: center; padding: 2px 12px 0 16px; background: linear-gradient(90deg, #f1f1f1, #fbfbfb); white-space: nowrap; font-size: 16.5px; }
.doc { text-align: right; font-size: 17px; }
.g-tabs { height: 34px; flex: none; display: grid; grid-template-columns: 81px 69px 57px 71px 68px 80px 65px 88px 98px 78px 69px 49px 104px 97px 70px 100px; align-items: center; padding-left: 12px; color: #6a6a6a; background: #f0f0f0; border-bottom: 1.5px solid #999; font-size: 15.2px; }
.g-tabs .on { height: 35px; margin: 0 0 -2px -12px; padding: 0 0 3px 11px; width: 82px; display: flex; align-items: center; border: 1.5px solid #999; border-bottom: 0; border-radius: 7px 7px 0 0; background: linear-gradient(#fff 60%, #dcdcdc); color: #000; }
.ribbon { height: 131px; flex: none; display: flex; gap: 6.5px; padding: 3px 0 0 3px; background: linear-gradient(#d8d8d8, #f1f1f1); border-bottom: 2px solid #888; }
.grp { height: 108px; border-radius: 6px; border: 1.5px solid #777; overflow: hidden; background: linear-gradient(#dcdcdc, #f0f0f0); box-shadow: inset 0 0 0 1.5px #fafafa; display: flex; flex-direction: column; }
.cells { flex: 1; display: grid; grid-template-rows: 42px 42px; padding-top: 2px; place-items: center; }
.cells svg { width: 31px; height: 31px; }
.g5 { width: 276px; }
.g3 { width: 161px; }
.g2 { width: 105px; }
.g5 .cells { grid-template-columns: 50px 57px 57px 57px 1fr; background: linear-gradient(90deg, transparent 51px, #ccc 51px 52px, transparent 52px 108px, #ccc 108px 109px, transparent 109px 165px, #ccc 165px 166px, transparent 166px 222px, #ccc 222px 223px, transparent 223px); }
.g3 .cells { grid-template-columns: 50px 57px 1fr; background: linear-gradient(90deg, transparent 51px, #ccc 51px 52px, transparent 52px 108px, #ccc 108px 109px, transparent 109px); }
.g2 .cells { grid-template-columns: 50px 1fr; background: linear-gradient(90deg, transparent 51px, #ccc 51px 52px, transparent 52px); }
.grp footer { height: 20px; background: #222; color: #fff; font-size: 14px; line-height: 18px; text-align: center; padding-right: 14px; position: relative; }
.grp footer i { position: absolute; right: 3px; top: 0; font-style: normal; color: #999; font-weight: 700; }
.mm { font: italic 700 29px "Liberation Serif", serif; line-height: 28px; white-space: nowrap; }
.mm sup { font-size: 17px; line-height: 10px; }
.g-bar { height: 44px; flex: none; display: flex; align-items: center; padding: 0 6px 0 3px; background: linear-gradient(#f8f8f8, #fdfdfd 40%, #f4f4f4); }
.g-bar svg { width: 32px; height: 32px; }
.g-bar > svg:nth-child(2) { margin-left: 12px; }
.g-bar hr { width: 1px; height: 36px; border: 0; background: #c8c8c8; margin: 0 3px 0 9px; }
.zoom { width: 202px; height: 33px; background: #fff; border: 1.5px solid #888; display: flex; justify-content: space-between; align-items: center; padding: 0 6px 0 4px; margin-right: 7px; }
.g-bar .zoom svg { width: 12px; height: 8px; }
.g-bar em { border: 4px solid transparent; border-top: 5px solid #111; border-bottom: 0; margin: 3px 11px 0 9px; }
.g-right { margin-left: auto; display: flex; align-items: center; gap: 7px; }
.g-right svg { width: 33px; height: 33px; }
.g-right .sel { width: 39px; height: 38px; border: 1.5px solid #2a88d8; padding: 2px; }
.g-right hr { margin: 0 4px 0 0; }
.g-right hr:last-of-type { margin: 0 -2px 0 0; }
.g-right em { margin: 3px 5px 0 3px; }
.canvas { width: 3826px; height: 805px; margin-left: 1px; background: #d4d0c8; }
.wire { fill: none; stroke: #000; stroke-opacity: .6; stroke-width: 5; }
.mono { font-family: "Liberation Mono", monospace; }
```
FILE: canvas.js
```js
// Builds the node diagram: grid, group, wires, then components.
const out = [];
const add = s => out.push(s);
const text = (x, y, s, o = {}) => add(`<text x="${x}" y="${y}" font-size="${o.size || 18}" fill="${o.fill || '#161616'}" text-anchor="${o.anchor || 'start'}" ${o.w ? `textLength="${o.w}" lengthAdjust="spacingAndGlyphs"` : ''} ${o.bold ? 'font-weight="700"' : ''} ${o.mono ? 'class="mono"' : ''} xml:space="preserve">${s}</text>`);
const port = (x, y) => add(`<circle cx="${x}" cy="${y}" r="6" fill="#fff" stroke="#000" stroke-width="3"/>`);
const body = (x1, y1, x2, y2, fill) => add(`<rect x="${x1}" y="${y1}" width="${x2 - x1}" height="${y2 - y1}" rx="5" fill="${fill}" stroke="#222" stroke-width="1.800"/>`);
const wire = (x1, y1, x2, y2, d) => { const k = d || (x2 - x1) / 2; add(`<path class="wire" d="M${x1} ${y1}C${x1 + k} ${y1} ${x2 - k} ${y2} ${x2} ${y2}"/>`); };

for (let x = 261.5; x < 3829; x += 264.75) add(`<path d="M${x} 1895V2700" stroke="#b9b7b0" stroke-width="1.500"/>`);
for (let y = 1965.3; y < 2700; y += 88.2) add(`<path d="M3 ${y}H3829" stroke="#b9b7b0" stroke-width="1.500"/>`);
add('<rect x="0" y="1890" width="1882" height="820" fill="#b79fec" fill-opacity=".88" stroke="#8f82ad"/>');

add('<path class="wire" d="M171 2250C60 2250 19 2300 19 2420 19 2470 23 2500 22 2530 20 2575 12 2610 3 2628"/>');
wire(504, 2250, 742, 2251.5); wire(504, 2250, 748, 2460, 125); wire(573, 2297, 588, 2292); wire(705, 2292, 744, 2292);
wire(576, 2505, 595, 2500); wire(714, 2500, 750, 2500); wire(870, 2252, 1226, 2258.5); wire(875, 2460, 1237, 2456);
wire(1574, 2258.5, 1708, 1983, 205); wire(1574, 2258.5, 2176, 2136.5, 250); wire(1584, 2456, 2182, 2440);
wire(2059, 2151, 2176, 2171.5); wire(2058, 2232, 2176, 2207); wire(2046, 2311.5, 2176, 2243);
wire(2036, 2454, 2182, 2475.5); wire(2041, 2511, 2182, 2511); wire(2020, 2578, 2182, 2546.5);
add(`<path class="wire" d="M2347 2190C2400 2190 2421 2170 2421 2151 2421 2085 2311 2000 2220 1895"/>
<path class="wire" d="M2353 2493.5C2433 2493.500 2467 2471 2467 2432 2467 2362 2389 2284 2341 2231L2239 2115C2183 2043 2137 1993 2137 1942.500 2137 1916 2153 1901 2173 1895"/>
<path class="wire" d="M2085 1895C2155 1915 2200 1920 2252 1920M2377 1902C2455 1902 2522 1900 2588 1894"/>
<path class="wire" d="M2469 2700C2633 2517 2810 2298 2966 2162 3099 2047 3265 1920 3550 1894"/>`);

const note = (x1, y1, x2, y2, h, lines, o = {}) => {
  const py = o.py || (y1 + y2) / 2; port(x1 - 1, py); port(x2 + 1, py);
  body(x1, y1, x2, y2, '#86fff8');
  if (h) {
    add(`<rect x="${x1 + 1.5}" y="${h}" width="${x2 - x1 - 3}" height="14" fill="url(#noteSh)"/><path d="M${x1 + 1} ${h}V${y1 + 5}q0-4 4-4H${x2 - 5}q4 0 4 4V${h}z" fill="#6ccdc8"/><path d="M${x1 + 2} ${y1 + 3}H${x2 - 2}" stroke="#b8f4f0" stroke-width="1.500"/><path d="M${x1} ${h}H${x2}" stroke="#111" stroke-width="1.800"/>`);
    text((x1 + x2) / 2, h - 10, 'notes', { anchor: 'middle', w: 47 });
  }
  lines.forEach(l => text(l[0], l[1] + 8, l[2], { size: 28, bold: 1, mono: 1, w: l[3], fill: o.fill || '#000' }));
};
note(177, 2027, 888, 2186.5, 2059, [[237, 2071, "design origin, so we add a 'move'", 572], [186, 2103, 'transform. This moves the design origin', 679], [247, 2135, 'in the Z direction [up/down] the', 556], [211, 2167, 'distance given in the numeric slider', 627]]);
add('<rect x="874" y="2118" width="13" height="66" rx="6" fill="#4f9c97"/>');
note(178.5, 2338, 549, 2437, 2369.5, [[201, 2385, 'try adjusting this', 311], [270, 2417, 'Z position', 173]]);
note(182, 2549.5, 553.5, 2648.5, 2581, [[204, 2597, 'try adjusting this', 312], [274, 2629, 'Z position', 173]]);
note(1001, 1880, 1624.5, 2024, 0, [[1034, 1951, 'Let us create 2 nested spheres.', 538]], { fill: '#043804', py: 1935.5 });
note(1241, 2643, 1864.5, 2760, 2675, [[1275, 2706, 'In the future we may need to do', 540]], { fill: '#043804' });

port(1711, 1983); port(1999, 1983);
body(1714, 1895.5, 1997, 2072, '#fff857');
add('<path d="M1715 1927h281v33h-281z" fill="#d6d24c"/><path d="M1715 1927V1897h281v30z" fill="#cccb49"/><path d="M1716 1898.500h279" stroke="#f0f0a0" stroke-width="2"/><path d="M1714 1927h283" stroke="#111" stroke-width="1.800"/><path d="M1738.500 1928v143" stroke="#d0cc40" stroke-width="1.500"/>');
text(1855, 1917, 'Panel', { anchor: 'middle', w: 46 });
const pm = { size: 19, mono: 1, fill: '#1c5010' };
text(1942, 1948, '{0}', { ...pm, w: 32 }); text(1722, 1987, '0', pm); text(1743, 1976, 'O(0.00,0.00,10.00) Z', { ...pm, w: 233 }); text(1746, 1997, '(0.00,0.00,1.00)', { ...pm, w: 181 });

const param = (x1, y1, x2, y2, s, tx, w) => { const y = (y1 + y2) / 2; port(x1 - 2, y); port(x2 + 2, y); body(x1, y1, x2, y2, 'url(#nodeG)'); text(tx, y + 6, s, { w }); };
param(175, 2231, 499, 2268, 'Pln Cell Phone Stand Design Origin', 186, 299);
param(1230.5, 2240, 1570, 2277, 'Pln Cell Phone Stand Sphere 1 Origin', 1242, 315);
param(1241, 2438.5, 1580.5, 2474, 'Pln Cell Phone Stand Sphere 2 Origin', 1252, 316);

const slider = (x1, y1, x2, sx, label, lw, knob, val, vx, round) => {
  const y2 = y1 + 36, y = (y1 + y2) / 2; port(x2 + 2, y);
  body(x1, y1, x2, y2, 'url(#nodeG)');
  add(`<path d="M${sx} ${y1 + 1}H${x2 - 4}q3 0 3 3V${y2 - 4}q0 3-3 3H${sx}z" fill="url(#sldG)"/><path d="M${sx} ${y1}V${y2}" stroke="#222" stroke-width="1.500"/>`);
  const a = sx + 17.5, p = 17.7; let d = `M${a} ${y}h${p * 10}`;
  for (let i = 0; i <= 10; i++) d += `M${a + i * p} ${y}v${i % 10 ? -6 : -10}`;
  add(`<path d="${d}" stroke="#b4b4b4" stroke-width="1.300" fill="none"/>`);
  const l = Math.min(vx, knob - 8) - 3, r = Math.max(vx + val.length * 10, knob + 8) + 3;
  add(`<rect x="${l}" y="${y - 11}" width="${r - l}" height="22" fill="#dcdcdc"/>`);
  add(round ? `<circle cx="${knob}" cy="${y}" r="5.500" fill="#fff" stroke="#000" stroke-width="3.500"/>` : `<path d="M${knob} ${y - 6.5}l5.500 6.500-5.500 6.500-5.500-6.500z" fill="#fff" stroke="#000" stroke-width="2.200"/>`);
  text(x1 + 11.5, y + 6, label, { w: lw }); text(vx, y + 6, val, { w: val.length * 10 });
};
slider(178.5, 2279, 567.5, 355, 'Sphere 1 Center Z', 153, 470, '10', 435.5, 1);
slider(182, 2487.5, 571.5, 359, 'Sphere 2 Center Z', 153, 504.5, '45', 469, 1);
slider(1229, 2313, 1649, 1437, 'Sphere 1 Solid Radius', 184, 1525.5, '40', 1538, 1);
slider(1207.5, 2539, 1621, 1409, 'Sphere 2 Void radius', 177, 1497, '40', 1509.5, 1);
slider(1696, 2133, 2055, 1843, 'Number Slider', 124, 1938.5, '88', 1952);
slider(1694.5, 2214.5, 2054, 1841, 'Number Slider', 124, 1945, '98', 1959);
slider(1683.5, 2293.5, 2043, 1831, 'Number Slider', 124, 1953, '118', 1908);
slider(1673, 2436.5, 2032.5, 1820.5, 'Number Slider', 124, 1904, '76', 1918.5);
slider(1678.5, 2493, 2037.5, 1825, 'Number Slider', 124, 1890.5, '54', 1904);
slider(1657, 2560, 2016, 1804.5, 'Number Slider', 124, 1876, '62', 1890);

const icon = (x1, y1, x2, y2, s, w, size) => {
  add(`<rect x="${x1}" y="${y1}" width="${x2 - x1}" height="${y2 - y1}" rx="5" fill="url(#icoG)" stroke="#000" stroke-width="2"/>`);
  const cx = (x1 + x2) / 2, cy = (y1 + y2) / 2;
  add(`<text transform="translate(${cx + 7.5} ${cy}) rotate(-90)" text-anchor="middle" font-size="${size || 21}" font-weight="700" fill="#fff" ${w ? `textLength="${w}" lengthAdjust="spacingAndGlyphs"` : ''}>${s}</text>`);
};
const comp = (x1, y1, x2, y2, ins, outs, ic, fill) => {
  ins.forEach(p => port(x1 - 2, p[1])); outs.forEach(p => port(x2 + 2, p[1]));
  body(x1, y1, x2, y2, fill || 'url(#nodeG)'); icon(...ic);
  ins.forEach(p => text(p[2], p[1] + 6.5, p[0], { anchor: p[3] || 'middle', w: p[4] })); outs.forEach(p => text(p[2], p[1] + 6.5, p[0], { anchor: 'middle' }));
};
comp(590, 2267.5, 701.5, 2317, [['F', 2292, 606]], [['V', 2292, 676]], [620, 2271, 663, 2313, 'Z']);
comp(598, 2475.5, 710.5, 2525.5, [['F', 2500, 615]], [['V', 2500, 685]], [629, 2479, 672, 2522, 'Z']);
comp(747, 2228, 865.5, 2317, [['G', 2252, 767], ['T', 2292, 768]], [['G', 2252, 839], ['X', 2292, 838]], [782.5, 2232, 825, 2314, 'Move', 64]);
comp(752.5, 2436.5, 871, 2525.5, [['G', 2460, 772], ['T', 2500, 773]], [['G', 2460, 845], ['X', 2500, 844]], [788, 2440.5, 830.5, 2522.5, 'Move', 64]);
comp(2180, 2115, 2341, 2266, [['Base', 2136.5, 2231, 'end', 39], ['X', 2172, 2231, 'end'], ['Y', 2207, 2231, 'end'], ['Z', 2243, 2231, 'end']], [['Box', 2190, 2306]], [2240, 2119, 2283, 2262, 'Center Box', 126], 'url(#nodeBig)');
comp(2186.5, 2419, 2347.5, 2569.5, [['Base', 2440, 2238, 'end', 39], ['X', 2475.5, 2238, 'end'], ['Y', 2511, 2238, 'end'], ['Z', 2546.5, 2238, 'end']], [['Box', 2494, 2312]], [2246.5, 2422.5, 2290, 2566, 'Center Box', 126], 'url(#nodeBig)');
comp(2257.5, 1850, 2372, 1942.5, [['B', 1920, 2277]], [['R', 1902, 2347]], [2291, 1854, 2334, 1939, 'SDiff', 66]);
comp(3682.5, 1820, 3797, 1908, [], [], [3715, 1824, 3758, 1904, '']);

add(`<rect x="3669" y="2095" width="111" height="111" rx="22" fill="#0c1027" stroke="#73757f" stroke-width="10"/>
<g transform="translate(3724 2150)"><path d="M6-34h18Q14-16 10-8-2-8-8-2-14 2-20 5-22-10-16-16z" fill="url(#sBlue)"/><path d="M-6 34h-18Q-14 14-10 8 2 8 8 0 14-6 20-8 30-2 24 8 18 18-6 34z" fill="url(#sBlue)"/></g>`);
document.getElementById('canvas').innerHTML = out.join('');
```
